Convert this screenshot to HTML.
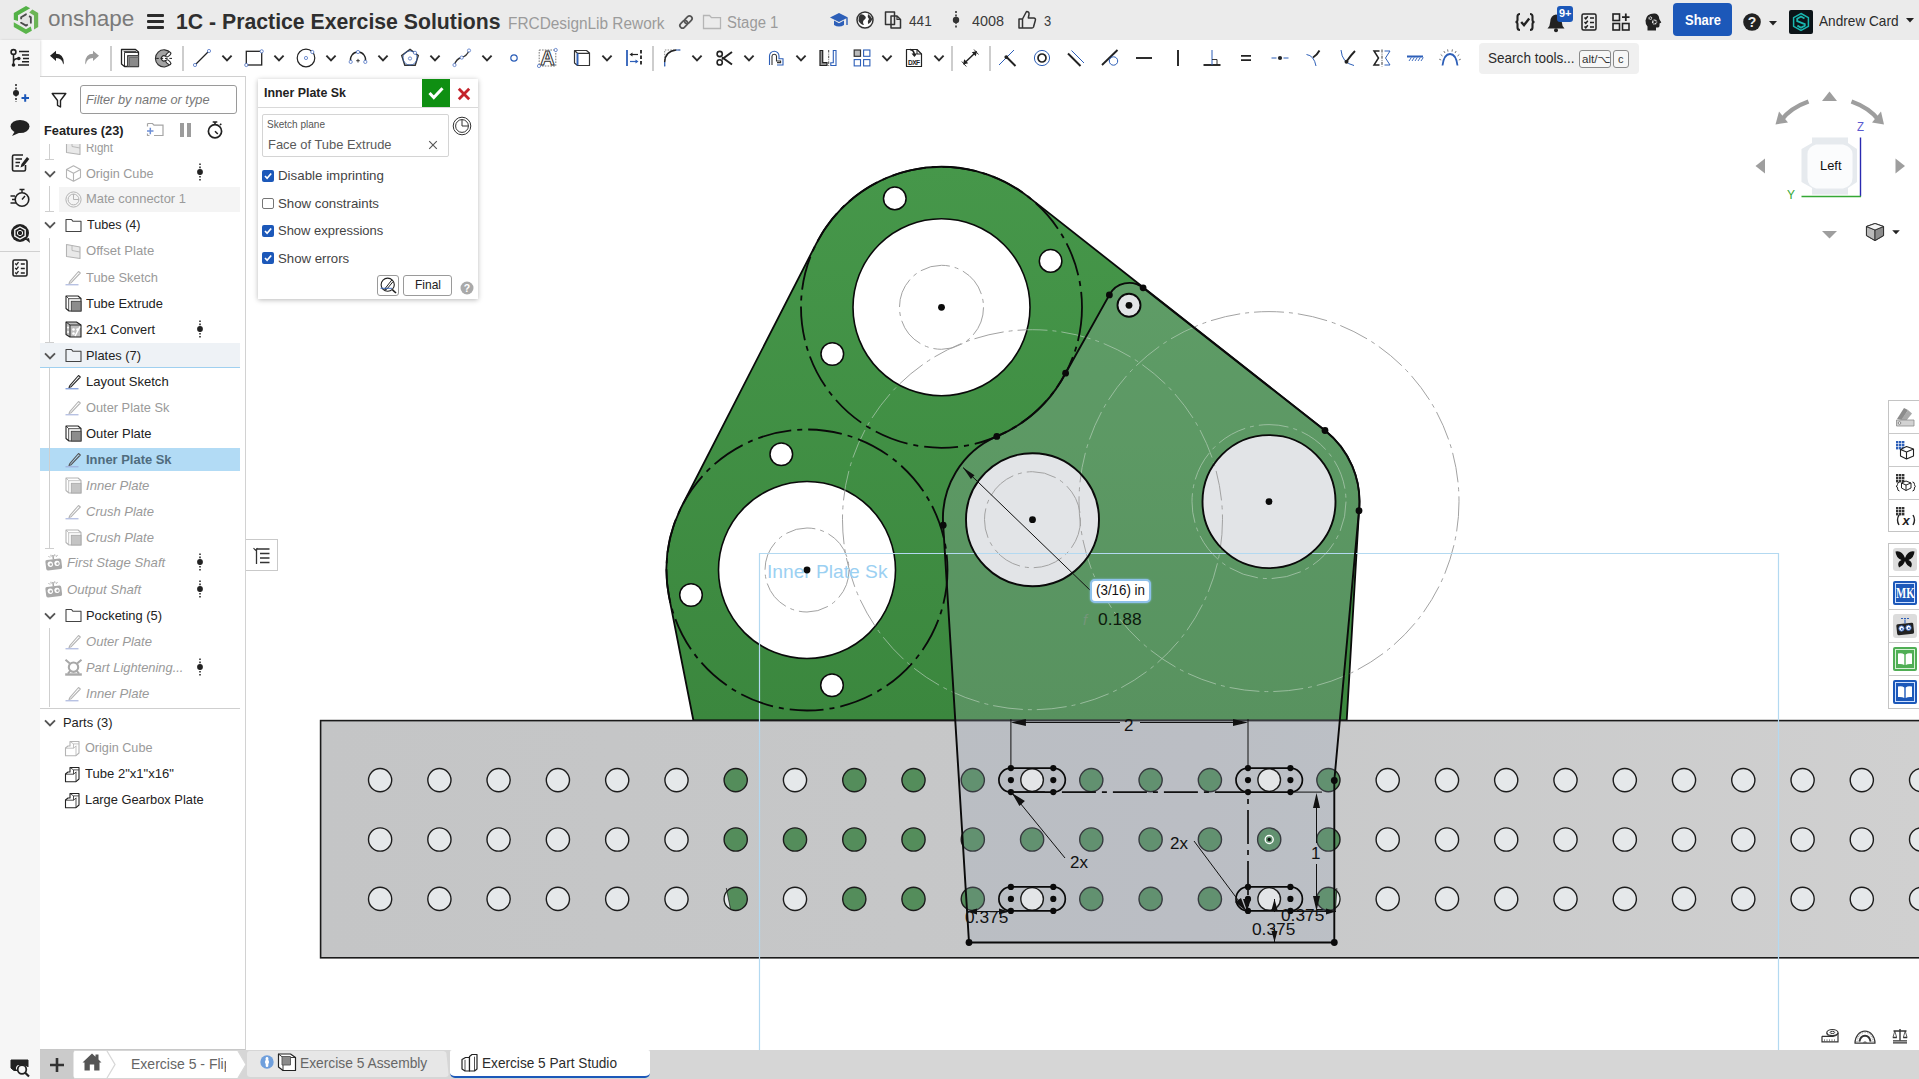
<!DOCTYPE html>
<html><head><meta charset="utf-8"><title>Onshape</title>
<style>
html,body{margin:0;padding:0;}
body{width:1919px;height:1079px;overflow:hidden;position:relative;background:#fff;font-family:"Liberation Sans","DejaVu Sans",sans-serif;}
.t{position:absolute;white-space:nowrap;transform-origin:0 50%;display:block;}
.a{position:absolute;}
svg{position:absolute;overflow:visible;}
svg text{font-family:"Liberation Sans",sans-serif;}
</style></head><body>
<svg width="1919" height="1079" viewBox="0 0 1919 1079" style="left:0;top:0">
<defs>
<linearGradient id="gd" x1="0" y1="166" x2="0" y2="720" gradientUnits="userSpaceOnUse"><stop offset="0" stop-color="#46974a"/><stop offset="1" stop-color="#3b873e"/></linearGradient>
<linearGradient id="gt" x1="320" y1="0" x2="1919" y2="0" gradientUnits="userSpaceOnUse"><stop offset="0" stop-color="#c4c5c6"/><stop offset="0.55" stop-color="#c7c8c9"/><stop offset="1" stop-color="#d0d0d0"/></linearGradient>
<clipPath id="ctube"><rect x="320" y="720.5" width="1600" height="237.5"/></clipPath><clipPath id="cabove"><rect x="320" y="0" width="1600" height="720.5"/></clipPath>
</defs>
<path d="M693.4,720.5 L669.1,597.1 A140.5,140.5 0 0 1 681.9,506.0 L816.4,243.3 A140.5,140.5 0 0 1 1028.4,196.9 L1325.0,430.5 A90.5,90.5 0 0 1 1359.0,510.7 L1346.7,720.5 Z" fill="url(#gd)" stroke="#0a0a0a" stroke-width="1.8" stroke-linejoin="round"/>
<circle cx="941.5" cy="307.3" r="88.5" fill="#fff" stroke="#0a0a0a" stroke-width="1.6"/>
<circle cx="807.0" cy="570.0" r="88.5" fill="#fff" stroke="#0a0a0a" stroke-width="1.6"/>
<circle cx="894.8" cy="198.4" r="11.3" fill="#fff" stroke="#0a0a0a" stroke-width="1.5"/>
<circle cx="1050.6" cy="260.9" r="11.3" fill="#fff" stroke="#0a0a0a" stroke-width="1.5"/>
<circle cx="832.3" cy="354.0" r="11.3" fill="#fff" stroke="#0a0a0a" stroke-width="1.5"/>
<circle cx="781.3" cy="454.2" r="11.3" fill="#fff" stroke="#0a0a0a" stroke-width="1.5"/>
<circle cx="691.0" cy="595.0" r="11.3" fill="#fff" stroke="#0a0a0a" stroke-width="1.5"/>
<circle cx="832.0" cy="685.3" r="11.3" fill="#fff" stroke="#0a0a0a" stroke-width="1.5"/>
<rect x="320.6" y="720.6" width="1610" height="237.2" fill="url(#gt)" stroke="#1a1a1a" stroke-width="1.6"/>
<circle cx="380.1" cy="780.1" r="11.6" fill="#e5e8ea" stroke="#1c1c1c" stroke-width="1.4"/>
<circle cx="439.4" cy="780.1" r="11.6" fill="#e5e8ea" stroke="#1c1c1c" stroke-width="1.4"/>
<circle cx="498.6" cy="780.1" r="11.6" fill="#e5e8ea" stroke="#1c1c1c" stroke-width="1.4"/>
<circle cx="557.9" cy="780.1" r="11.6" fill="#e5e8ea" stroke="#1c1c1c" stroke-width="1.4"/>
<circle cx="617.2" cy="780.1" r="11.6" fill="#e5e8ea" stroke="#1c1c1c" stroke-width="1.4"/>
<circle cx="676.5" cy="780.1" r="11.6" fill="#e5e8ea" stroke="#1c1c1c" stroke-width="1.4"/>
<circle cx="735.7" cy="780.1" r="11.6" fill="#548d5b" stroke="#1c1c1c" stroke-width="1.4"/>
<circle cx="795.0" cy="780.1" r="11.6" fill="#e5e8ea" stroke="#1c1c1c" stroke-width="1.4"/>
<circle cx="854.3" cy="780.1" r="11.6" fill="#548d5b" stroke="#1c1c1c" stroke-width="1.4"/>
<circle cx="913.5" cy="780.1" r="11.6" fill="#548d5b" stroke="#1c1c1c" stroke-width="1.4"/>
<circle cx="972.8" cy="780.1" r="11.6" fill="#548d5b" stroke="#1c1c1c" stroke-width="1.4"/>
<circle cx="1091.3" cy="780.1" r="11.6" fill="#548d5b" stroke="#1c1c1c" stroke-width="1.4"/>
<circle cx="1150.6" cy="780.1" r="11.6" fill="#548d5b" stroke="#1c1c1c" stroke-width="1.4"/>
<circle cx="1209.9" cy="780.1" r="11.6" fill="#548d5b" stroke="#1c1c1c" stroke-width="1.4"/>
<circle cx="1328.4" cy="780.1" r="11.6" fill="#548d5b" stroke="#1c1c1c" stroke-width="1.4"/>
<circle cx="1387.7" cy="780.1" r="11.6" fill="#e5e8ea" stroke="#1c1c1c" stroke-width="1.4"/>
<circle cx="1447.0" cy="780.1" r="11.6" fill="#e5e8ea" stroke="#1c1c1c" stroke-width="1.4"/>
<circle cx="1506.2" cy="780.1" r="11.6" fill="#e5e8ea" stroke="#1c1c1c" stroke-width="1.4"/>
<circle cx="1565.5" cy="780.1" r="11.6" fill="#e5e8ea" stroke="#1c1c1c" stroke-width="1.4"/>
<circle cx="1624.8" cy="780.1" r="11.6" fill="#e5e8ea" stroke="#1c1c1c" stroke-width="1.4"/>
<circle cx="1684.0" cy="780.1" r="11.6" fill="#e5e8ea" stroke="#1c1c1c" stroke-width="1.4"/>
<circle cx="1743.3" cy="780.1" r="11.6" fill="#e5e8ea" stroke="#1c1c1c" stroke-width="1.4"/>
<circle cx="1802.6" cy="780.1" r="11.6" fill="#e5e8ea" stroke="#1c1c1c" stroke-width="1.4"/>
<circle cx="1861.8" cy="780.1" r="11.6" fill="#e5e8ea" stroke="#1c1c1c" stroke-width="1.4"/>
<circle cx="1921.1" cy="780.1" r="11.6" fill="#e5e8ea" stroke="#1c1c1c" stroke-width="1.4"/>
<circle cx="380.1" cy="839.5" r="11.6" fill="#e5e8ea" stroke="#1c1c1c" stroke-width="1.4"/>
<circle cx="439.4" cy="839.5" r="11.6" fill="#e5e8ea" stroke="#1c1c1c" stroke-width="1.4"/>
<circle cx="498.6" cy="839.5" r="11.6" fill="#e5e8ea" stroke="#1c1c1c" stroke-width="1.4"/>
<circle cx="557.9" cy="839.5" r="11.6" fill="#e5e8ea" stroke="#1c1c1c" stroke-width="1.4"/>
<circle cx="617.2" cy="839.5" r="11.6" fill="#e5e8ea" stroke="#1c1c1c" stroke-width="1.4"/>
<circle cx="676.5" cy="839.5" r="11.6" fill="#e5e8ea" stroke="#1c1c1c" stroke-width="1.4"/>
<circle cx="735.7" cy="839.5" r="11.6" fill="#548d5b" stroke="#1c1c1c" stroke-width="1.4"/>
<circle cx="795.0" cy="839.5" r="11.6" fill="#548d5b" stroke="#1c1c1c" stroke-width="1.4"/>
<circle cx="854.3" cy="839.5" r="11.6" fill="#548d5b" stroke="#1c1c1c" stroke-width="1.4"/>
<circle cx="913.5" cy="839.5" r="11.6" fill="#548d5b" stroke="#1c1c1c" stroke-width="1.4"/>
<circle cx="972.8" cy="839.5" r="11.6" fill="#548d5b" stroke="#1c1c1c" stroke-width="1.4"/>
<circle cx="1032.1" cy="839.5" r="11.6" fill="#548d5b" stroke="#1c1c1c" stroke-width="1.4"/>
<circle cx="1091.3" cy="839.5" r="11.6" fill="#548d5b" stroke="#1c1c1c" stroke-width="1.4"/>
<circle cx="1150.6" cy="839.5" r="11.6" fill="#548d5b" stroke="#1c1c1c" stroke-width="1.4"/>
<circle cx="1209.9" cy="839.5" r="11.6" fill="#548d5b" stroke="#1c1c1c" stroke-width="1.4"/>
<circle cx="1269.2" cy="839.5" r="11.6" fill="#548d5b" stroke="#1c1c1c" stroke-width="1.4"/>
<circle cx="1328.4" cy="839.5" r="11.6" fill="#548d5b" stroke="#1c1c1c" stroke-width="1.4"/>
<circle cx="1387.7" cy="839.5" r="11.6" fill="#e5e8ea" stroke="#1c1c1c" stroke-width="1.4"/>
<circle cx="1447.0" cy="839.5" r="11.6" fill="#e5e8ea" stroke="#1c1c1c" stroke-width="1.4"/>
<circle cx="1506.2" cy="839.5" r="11.6" fill="#e5e8ea" stroke="#1c1c1c" stroke-width="1.4"/>
<circle cx="1565.5" cy="839.5" r="11.6" fill="#e5e8ea" stroke="#1c1c1c" stroke-width="1.4"/>
<circle cx="1624.8" cy="839.5" r="11.6" fill="#e5e8ea" stroke="#1c1c1c" stroke-width="1.4"/>
<circle cx="1684.0" cy="839.5" r="11.6" fill="#e5e8ea" stroke="#1c1c1c" stroke-width="1.4"/>
<circle cx="1743.3" cy="839.5" r="11.6" fill="#e5e8ea" stroke="#1c1c1c" stroke-width="1.4"/>
<circle cx="1802.6" cy="839.5" r="11.6" fill="#e5e8ea" stroke="#1c1c1c" stroke-width="1.4"/>
<circle cx="1861.8" cy="839.5" r="11.6" fill="#e5e8ea" stroke="#1c1c1c" stroke-width="1.4"/>
<circle cx="1921.1" cy="839.5" r="11.6" fill="#e5e8ea" stroke="#1c1c1c" stroke-width="1.4"/>
<circle cx="380.1" cy="898.9" r="11.6" fill="#e5e8ea" stroke="#1c1c1c" stroke-width="1.4"/>
<circle cx="439.4" cy="898.9" r="11.6" fill="#e5e8ea" stroke="#1c1c1c" stroke-width="1.4"/>
<circle cx="498.6" cy="898.9" r="11.6" fill="#e5e8ea" stroke="#1c1c1c" stroke-width="1.4"/>
<circle cx="557.9" cy="898.9" r="11.6" fill="#e5e8ea" stroke="#1c1c1c" stroke-width="1.4"/>
<circle cx="617.2" cy="898.9" r="11.6" fill="#e5e8ea" stroke="#1c1c1c" stroke-width="1.4"/>
<circle cx="676.5" cy="898.9" r="11.6" fill="#e5e8ea" stroke="#1c1c1c" stroke-width="1.4"/>
<circle cx="735.7" cy="898.9" r="11.6" fill="#548d5b" stroke="#1c1c1c" stroke-width="1.4"/>
<circle cx="795.0" cy="898.9" r="11.6" fill="#e5e8ea" stroke="#1c1c1c" stroke-width="1.4"/>
<circle cx="854.3" cy="898.9" r="11.6" fill="#548d5b" stroke="#1c1c1c" stroke-width="1.4"/>
<circle cx="913.5" cy="898.9" r="11.6" fill="#548d5b" stroke="#1c1c1c" stroke-width="1.4"/>
<circle cx="972.8" cy="898.9" r="11.6" fill="#548d5b" stroke="#1c1c1c" stroke-width="1.4"/>
<circle cx="1091.3" cy="898.9" r="11.6" fill="#548d5b" stroke="#1c1c1c" stroke-width="1.4"/>
<circle cx="1150.6" cy="898.9" r="11.6" fill="#548d5b" stroke="#1c1c1c" stroke-width="1.4"/>
<circle cx="1209.9" cy="898.9" r="11.6" fill="#548d5b" stroke="#1c1c1c" stroke-width="1.4"/>
<circle cx="1328.4" cy="898.9" r="11.6" fill="#548d5b" stroke="#1c1c1c" stroke-width="1.4"/>
<circle cx="1387.7" cy="898.9" r="11.6" fill="#e5e8ea" stroke="#1c1c1c" stroke-width="1.4"/>
<circle cx="1447.0" cy="898.9" r="11.6" fill="#e5e8ea" stroke="#1c1c1c" stroke-width="1.4"/>
<circle cx="1506.2" cy="898.9" r="11.6" fill="#e5e8ea" stroke="#1c1c1c" stroke-width="1.4"/>
<circle cx="1565.5" cy="898.9" r="11.6" fill="#e5e8ea" stroke="#1c1c1c" stroke-width="1.4"/>
<circle cx="1624.8" cy="898.9" r="11.6" fill="#e5e8ea" stroke="#1c1c1c" stroke-width="1.4"/>
<circle cx="1684.0" cy="898.9" r="11.6" fill="#e5e8ea" stroke="#1c1c1c" stroke-width="1.4"/>
<circle cx="1743.3" cy="898.9" r="11.6" fill="#e5e8ea" stroke="#1c1c1c" stroke-width="1.4"/>
<circle cx="1802.6" cy="898.9" r="11.6" fill="#e5e8ea" stroke="#1c1c1c" stroke-width="1.4"/>
<circle cx="1861.8" cy="898.9" r="11.6" fill="#e5e8ea" stroke="#1c1c1c" stroke-width="1.4"/>
<circle cx="1921.1" cy="898.9" r="11.6" fill="#e5e8ea" stroke="#1c1c1c" stroke-width="1.4"/>
<clipPath id="cl1"><path d="M700,880 L724.8,880 L732.6,920 L700,920 Z"/></clipPath>
<clipPath id="cl2"><path d="M1337.3,880 L1360,880 L1360,920 L1335.0,920 Z"/></clipPath>
<circle cx="735.7" cy="898.9" r="10.9" fill="#e5e8ea" clip-path="url(#cl1)"/>
<circle cx="1328.4" cy="898.9" r="10.9" fill="#e5e8ea" clip-path="url(#cl2)"/>
<path d="M726.3,888 L730.7,910 M1336.8,888 L1335.5,910" stroke="#222" stroke-width="0.8" clip-path="url(#ctube)"/>
<path d="M1109.4,294.9 A22.3,22.3 0 0 1 1143.1,287.8 L1325.0,430.5 A90.5,90.5 0 0 1 1359.0,510.7 L1334.3,780.5 L1334.3,942.5 L969.0,942.5 L943.2,525.2 A89.5,89.5 0 0 1 996.8,436.4 A140.5,140.5 0 0 0 1065.6,373.2 Z M1202.5,501.6 a66.5,66.5 0 1 0 133.0,0 a66.5,66.5 0 1 0 -133.0,0 Z M966.0,519.7 a66.5,66.5 0 1 0 133.0,0 a66.5,66.5 0 1 0 -133.0,0 Z M1117.5,305.3 a11.5,11.5 0 1 0 23,0 a11.5,11.5 0 1 0 -23,0 Z " fill="rgba(186,184,206,0.23)" fill-rule="evenodd" stroke="none" clip-path="url(#cabove)"/>
<path d="M1109.4,294.9 A22.3,22.3 0 0 1 1143.1,287.8 L1325.0,430.5 A90.5,90.5 0 0 1 1359.0,510.7 L1334.3,780.5 L1334.3,942.5 L969.0,942.5 L943.2,525.2 A89.5,89.5 0 0 1 996.8,436.4 A140.5,140.5 0 0 0 1065.6,373.2 Z M1202.5,501.6 a66.5,66.5 0 1 0 133.0,0 a66.5,66.5 0 1 0 -133.0,0 Z M966.0,519.7 a66.5,66.5 0 1 0 133.0,0 a66.5,66.5 0 1 0 -133.0,0 Z M1117.5,305.3 a11.5,11.5 0 1 0 23,0 a11.5,11.5 0 1 0 -23,0 Z " fill="rgba(146,162,180,0.23)" fill-rule="evenodd" stroke="none" clip-path="url(#ctube)"/>
<circle cx="1269.0" cy="501.6" r="66.5" fill="#e2e4e7"/>
<circle cx="1032.5" cy="519.7" r="66.5" fill="#e2e4e7"/>
<circle cx="1129.0" cy="305.3" r="11.5" fill="#e2e4e7"/>
<circle cx="1032.1" cy="780.1" r="11.3" fill="#e3e5e7" stroke="#1c1c1c" stroke-width="1.4"/>
<circle cx="1032.1" cy="898.9" r="11.3" fill="#e3e5e7" stroke="#1c1c1c" stroke-width="1.4"/>
<circle cx="1269.2" cy="780.1" r="11.3" fill="#e3e5e7" stroke="#1c1c1c" stroke-width="1.4"/>
<circle cx="1269.2" cy="898.9" r="11.3" fill="#e3e5e7" stroke="#1c1c1c" stroke-width="1.4"/>
<clipPath id="cin"><path clip-rule="evenodd" d="M693.4,720.5 L669.1,597.1 A140.5,140.5 0 0 1 681.9,506.0 L816.4,243.3 A140.5,140.5 0 0 1 1028.4,196.9 L1325.0,430.5 A90.5,90.5 0 0 1 1359.0,510.7 L1346.7,720.5 Z M853.0,307.3 a88.5,88.5 0 1 0 177.0,0 a88.5,88.5 0 1 0 -177.0,0 Z M718.5,570.0 a88.5,88.5 0 1 0 177.0,0 a88.5,88.5 0 1 0 -177.0,0 Z M1202.5,501.6 a66.5,66.5 0 1 0 133.0,0 a66.5,66.5 0 1 0 -133.0,0 Z M966.0,519.7 a66.5,66.5 0 1 0 133.0,0 a66.5,66.5 0 1 0 -133.0,0 Z "/></clipPath>
<clipPath id="cout"><path clip-rule="evenodd" d="M0,0 H1919 V1079 H0 Z M693.4,720.5 L669.1,597.1 A140.5,140.5 0 0 1 681.9,506.0 L816.4,243.3 A140.5,140.5 0 0 1 1028.4,196.9 L1325.0,430.5 A90.5,90.5 0 0 1 1359.0,510.7 L1346.7,720.5 Z M853.0,307.3 a88.5,88.5 0 1 0 177.0,0 a88.5,88.5 0 1 0 -177.0,0 Z M718.5,570.0 a88.5,88.5 0 1 0 177.0,0 a88.5,88.5 0 1 0 -177.0,0 Z M1202.5,501.6 a66.5,66.5 0 1 0 133.0,0 a66.5,66.5 0 1 0 -133.0,0 Z M966.0,519.7 a66.5,66.5 0 1 0 133.0,0 a66.5,66.5 0 1 0 -133.0,0 Z "/></clipPath>
<g clip-path="url(#cout)" fill="none" stroke="#a2a2a2" stroke-width="1" stroke-dasharray="30 5 4 5"><circle cx="1269.0" cy="501.6" r="190" /><circle cx="1032.5" cy="519.7" r="190" /><circle cx="1269.0" cy="501.6" r="77" /><circle cx="1032.5" cy="519.7" r="48" /><circle cx="941.5" cy="307.3" r="42" /><circle cx="807.0" cy="570.0" r="42" /></g>
<g clip-path="url(#cin)" fill="none" stroke="#b4cdb6" stroke-opacity="0.7" stroke-width="1" stroke-dasharray="30 5 4 5"><circle cx="1269.0" cy="501.6" r="190" /><circle cx="1032.5" cy="519.7" r="190" /><circle cx="1269.0" cy="501.6" r="77" /><circle cx="1032.5" cy="519.7" r="48" /><circle cx="941.5" cy="307.3" r="42" /><circle cx="807.0" cy="570.0" r="42" /></g>
<path d="M759.5,1052 V553.5 H1778.5 V1052" fill="none" stroke="#b3d9f1" stroke-width="1.2"/>
<text x="767" y="577.5" font-size="18.6" fill="#9bd0f2" textLength="120.5" lengthAdjust="spacingAndGlyphs">Inner Plate Sk</text>
<circle cx="941.5" cy="307.3" r="140.5" fill="none" stroke="#0a0a0a" stroke-width="1.8" stroke-dasharray="34 6 5 6"/>
<circle cx="807.0" cy="570.0" r="140.5" fill="none" stroke="#0a0a0a" stroke-width="1.8" stroke-dasharray="34 6 5 6"/>
<path d="M1065.6,373.2 L1109.4,294.9 A22.3,22.3 0 0 1 1143.1,287.8 L1325.0,430.5 A90.5,90.5 0 0 1 1359.0,510.7 L1334.3,780.5 L1334.3,942.5 L969.0,942.5 L943.2,525.2 A89.5,89.5 0 0 1 996.8,436.4 A140.5,140.5 0 0 0 1065.6,373.2" fill="none" stroke="#0a0a0a" stroke-width="1.9" stroke-linejoin="round"/>
<circle cx="1269.0" cy="501.6" r="66.5" fill="none" stroke="#0a0a0a" stroke-width="1.9"/>
<circle cx="1032.5" cy="519.7" r="66.5" fill="none" stroke="#0a0a0a" stroke-width="1.9"/>
<circle cx="1129.0" cy="305.3" r="11.5" fill="none" stroke="#0a0a0a" stroke-width="1.9"/>
<circle cx="941.5" cy="307.3" r="3.4" fill="#0a0a0a"/>
<circle cx="807.0" cy="570.0" r="3.4" fill="#0a0a0a"/>
<circle cx="1269.0" cy="501.6" r="3.4" fill="#0a0a0a"/>
<circle cx="1032.5" cy="519.7" r="3.4" fill="#0a0a0a"/>
<circle cx="1129.0" cy="305.3" r="3.4" fill="#0a0a0a"/>
<circle cx="1065.6" cy="373.2" r="3.4" fill="#0a0a0a"/>
<circle cx="1109.4" cy="294.9" r="3.4" fill="#0a0a0a"/>
<circle cx="1143.1" cy="287.8" r="3.4" fill="#0a0a0a"/>
<circle cx="1325.0" cy="430.5" r="3.4" fill="#0a0a0a"/>
<circle cx="1359.0" cy="510.7" r="3.4" fill="#0a0a0a"/>
<circle cx="969.0" cy="942.5" r="3.4" fill="#0a0a0a"/>
<circle cx="1334.3" cy="942.5" r="3.4" fill="#0a0a0a"/>
<circle cx="996.8" cy="436.4" r="3.4" fill="#0a0a0a"/>
<circle cx="943.2" cy="525.2" r="3.4" fill="#0a0a0a"/>
<circle cx="1334.3" cy="780.5" r="3.4" fill="#0a0a0a"/>
<path d="M1010.9,768.1 H1053.3 A12,12 0 0 1 1053.3,792.1 H1010.9 A12,12 0 0 1 1010.9,768.1 Z" fill="none" stroke="#0a0a0a" stroke-width="1.7"/>
<circle cx="1010.9" cy="768.1" r="3.1" fill="#0a0a0a"/>
<circle cx="1010.9" cy="780.1" r="3.1" fill="#0a0a0a"/>
<circle cx="1010.9" cy="792.1" r="3.1" fill="#0a0a0a"/>
<circle cx="1053.3" cy="768.1" r="3.1" fill="#0a0a0a"/>
<circle cx="1053.3" cy="780.1" r="3.1" fill="#0a0a0a"/>
<circle cx="1053.3" cy="792.1" r="3.1" fill="#0a0a0a"/>
<path d="M1010.9,886.9 H1053.3 A12,12 0 0 1 1053.3,910.9 H1010.9 A12,12 0 0 1 1010.9,886.9 Z" fill="none" stroke="#0a0a0a" stroke-width="1.7"/>
<circle cx="1010.9" cy="886.9" r="3.1" fill="#0a0a0a"/>
<circle cx="1010.9" cy="898.9" r="3.1" fill="#0a0a0a"/>
<circle cx="1010.9" cy="910.9" r="3.1" fill="#0a0a0a"/>
<circle cx="1053.3" cy="886.9" r="3.1" fill="#0a0a0a"/>
<circle cx="1053.3" cy="898.9" r="3.1" fill="#0a0a0a"/>
<circle cx="1053.3" cy="910.9" r="3.1" fill="#0a0a0a"/>
<path d="M1248.0,768.1 H1290.4 A12,12 0 0 1 1290.4,792.1 H1248.0 A12,12 0 0 1 1248.0,768.1 Z" fill="none" stroke="#0a0a0a" stroke-width="1.7"/>
<circle cx="1248.0" cy="768.1" r="3.1" fill="#0a0a0a"/>
<circle cx="1248.0" cy="780.1" r="3.1" fill="#0a0a0a"/>
<circle cx="1248.0" cy="792.1" r="3.1" fill="#0a0a0a"/>
<circle cx="1290.4" cy="768.1" r="3.1" fill="#0a0a0a"/>
<circle cx="1290.4" cy="780.1" r="3.1" fill="#0a0a0a"/>
<circle cx="1290.4" cy="792.1" r="3.1" fill="#0a0a0a"/>
<path d="M1248.0,886.9 H1290.4 A12,12 0 0 1 1290.4,910.9 H1248.0 A12,12 0 0 1 1248.0,886.9 Z" fill="none" stroke="#0a0a0a" stroke-width="1.7"/>
<circle cx="1248.0" cy="886.9" r="3.1" fill="#0a0a0a"/>
<circle cx="1248.0" cy="898.9" r="3.1" fill="#0a0a0a"/>
<circle cx="1248.0" cy="910.9" r="3.1" fill="#0a0a0a"/>
<circle cx="1290.4" cy="886.9" r="3.1" fill="#0a0a0a"/>
<circle cx="1290.4" cy="898.9" r="3.1" fill="#0a0a0a"/>
<circle cx="1290.4" cy="910.9" r="3.1" fill="#0a0a0a"/>
<path d="M1010.9,792.1 H1248.0 V911" fill="none" stroke="#111" stroke-width="1.7" stroke-dasharray="34 6 5 6"/>
<path d="M1010.9,768 V719 M1248.0,768 V719 M1014.9,722.5 H1120 M1140,722.5 H1244.0" stroke="#111" stroke-width="1" fill="none"/>
<path d="M1010.9,722.5 l15,-3.5 v7 Z M1248.0,722.5 l-15,-3.5 v7 Z" fill="#111"/>
<text x="1124" y="731" font-size="17" fill="#111">2</text>
<path d="M1290.0,792.1 H1322 M1316.5,797 V843 M1316.5,864 V905 M1290,910.9 h46" stroke="#111" stroke-width="1" fill="none"/>
<path d="M1316.5,793 l-3.5,15 h7 Z M1316.5,911 l-3.5,-15 h7 Z" fill="#111"/>
<text x="1311" y="859" font-size="17" fill="#111">1</text>
<path d="M1011.9,793 L1065,858 M1194,841 L1244,908" stroke="#111" stroke-width="1" fill="none"/>
<path d="M1011.9,793 l13,8 l-5.5,5 Z M1246,911 l-11,-9 l6,-4 Z" fill="#111"/>
<text x="1070" y="868" font-size="17" fill="#111">2x</text><text x="1170" y="849" font-size="17" fill="#111">2x</text>
<text x="965" y="923" font-size="16.4" fill="#111" textLength="43.3" lengthAdjust="spacingAndGlyphs">0.375</text>
<text x="1281" y="921" font-size="16.4" fill="#111" textLength="43.3" lengthAdjust="spacingAndGlyphs">0.375</text>
<text x="1252" y="935" font-size="16.4" fill="#111" textLength="43.3" lengthAdjust="spacingAndGlyphs">0.375</text>
<path d="M967,911.5 H1009 M1292,911.5 H1336 M1274.5,899 V912 M1274.5,928 V942" stroke="#111" stroke-width="1" fill="none"/>
<path d="M967,911.5 l10,-3 v6 Z M1009,911.5 l-10,-3 v6 Z M1336,911.5 l-10,-3 v6 Z M1274.5,899 l-3,11 h6 Z M1274.5,942 l-3,-11 h6 Z M1247,911 l-4,-12 h8 Z" fill="#111"/>
<circle cx="1269.2" cy="839.5" r="4" fill="none" stroke="#fff" stroke-width="1.4"/><circle cx="1269.2" cy="839.5" r="1.7" fill="#111"/>
<path d="M963,467.5 L1092,592" stroke="#111" stroke-width="1" fill="none"/>
<path d="M963,467.5 l11.5,7.8 l-3.6,3.6 Z" fill="#111"/>
<text x="1083" y="625" font-size="15" fill="#74967a" font-style="italic">f</text>
<text x="1098" y="625" font-size="16.5" fill="#0c1a0c" textLength="43.6" lengthAdjust="spacingAndGlyphs">0.188</text>
</svg>
<div class="a" style="left:1090px;top:579px;width:57px;height:20px;border:2px solid #8fc1ea;border-radius:5px;background:#fff;box-shadow:0 0 2px #8fc1ea;"></div>
<span class="t" style="left:1095.8px;top:582.3px;font-size:14.5px;line-height:17px;color:#111;transform:scaleX(0.9213);">(3/16) in</span>
<div class="a" style="left:0px;top:0px;width:1919px;height:40px;background:#ebebeb;"></div>
<div class="a" style="left:40px;top:40px;width:1879px;height:36px;background:#fff;"></div>
<div class="a" style="left:0px;top:40px;width:40px;height:1039px;background:#f6f6f6;box-shadow:1px 0 2px rgba(0,0,0,0.12);"></div>
<div class="a" style="left:40px;top:76px;width:206px;height:974px;background:#fff;border-right:1px solid #d2d2d2;border-top:1px solid #d0d0d0;border-bottom:1px solid #c8c8c8;box-sizing:border-box;"></div>
<div class="a" style="left:40px;top:1050px;width:1879px;height:29px;background:#d6d6d6;"></div>
<svg width="30" height="30" viewBox="-15 -15 30 30" style="left:10.9px;top:4.8px;"><path d="M-12.2,-0.3 V-7.05 L0,-14.1 L4.2,-11.7 L-8,-4.65 V0.9 Z" fill="#53b146" transform="rotate(0)"/><path d="M-12.2,-0.3 V-7.05 L0,-14.1 L4.2,-11.7 L-8,-4.65 V0.9 Z" fill="#6cb455" transform="rotate(120)"/><path d="M-12.2,-0.3 V-7.05 L0,-14.1 L4.2,-11.7 L-8,-4.65 V0.9 Z" fill="#5bb54b" transform="rotate(240)"/><path d="M0,-5.6 L4.85,-2.8 V2.8 L0,5.6 L-4.85,2.8 V-2.8 Z" fill="#e3e3e3" stroke="#4b4b4b" stroke-width="1.8" stroke-dasharray="8.4 2.8" stroke-dashoffset="-3.5"/></svg>
<span class="t" style="left:47.7px;top:5.6px;font-size:22px;line-height:26px;color:#7a7a7a;transform:scaleX(1.0224);">onshape</span>
<div class="a" style="left:147px;top:13.5px;width:17px;height:3px;background:#2b2b2b;border-radius:1px;"></div>
<div class="a" style="left:147px;top:19.5px;width:17px;height:3px;background:#2b2b2b;border-radius:1px;"></div>
<div class="a" style="left:147px;top:25.5px;width:17px;height:3px;background:#2b2b2b;border-radius:1px;"></div>
<span class="t" style="left:175.5px;top:7.7px;font-size:22.5px;line-height:27px;color:#2f2f2f;transform:scaleX(0.9437);font-weight:bold;">1C - Practice Exercise Solutions</span>
<span class="t" style="left:508.0px;top:13.5px;font-size:16px;line-height:19px;color:#9b9b9b;transform:scaleX(0.9618);">FRCDesignLib Rework</span>
<svg width="18" height="18" viewBox="-9 -9 18 18" style="left:677.0px;top:12.5px;"><g transform="rotate(-45)" fill="none" stroke="#555" stroke-width="1.7"><rect x="-7.5" y="-2.6" width="8.6" height="5.2" rx="2.6"/><rect x="-1.1" y="-2.6" width="8.6" height="5.2" rx="2.6"/></g></svg>
<svg width="20" height="20" viewBox="-10 -10 20 20" style="left:702.0px;top:11.5px;"><path d="M-8.5,-6.5 H-2.5 L-0.5,-4.3 H8.5 V6.5 H-8.5 Z" fill="none" stroke="#b5b5b5" stroke-width="1.3"/></svg>
<span class="t" style="left:726.5px;top:12.5px;font-size:16px;line-height:19px;color:#9b9b9b;transform:scaleX(0.9319);">Stage 1</span>
<svg width="20" height="20" viewBox="-10 -10 20 20" style="left:829.0px;top:10.0px;"><path d="M-9,-2.5 L0,-7 L9,-2.5 L0,2 Z" fill="#2d5fb8"/><path d="M-5,0.5 V5 Q0,8 5,5 V0.5 L0,3.3 Z" fill="#2d5fb8"/><path d="M8,-2 V5" stroke="#2d5fb8" stroke-width="1.4"/></svg>
<svg width="20" height="20" viewBox="-10 -10 20 20" style="left:855.0px;top:10.0px;"><circle r="8" fill="#fff" stroke="#333" stroke-width="1.5"/><path d="M-5,-5.5 Q-2,-6.5 0,-4 Q2,-2 -1,0 Q-3,2 -1,5 Q-4,5 -6.5,1 Q-7,-3 -5,-5.5 Z M3,-6 Q6,-4 7.3,-1 Q6,3 3,4 Q2,1 4,-1 Q2,-3 3,-6 Z" fill="#333"/></svg>
<svg width="20" height="20" viewBox="-10 -10 20 20" style="left:883.0px;top:10.0px;"><path d="M-7.5,-8 H1.5 V4.5 H-7.5 Z M-2,-4 H4 L7.5,-0.5 V8 H-2 Z" fill="#ebebeb" stroke="#333" stroke-width="1.5" stroke-linejoin="round"/><path d="M4,-4 V-0.5 H7.5" fill="none" stroke="#333" stroke-width="1.2"/></svg>
<span class="t" style="left:909.2px;top:11.5px;font-size:14.8px;line-height:18px;color:#3a3a3a;transform:scaleX(0.9193);">441</span>
<svg width="20" height="20" viewBox="-10 -10 20 20" style="left:946.0px;top:10.0px;"><circle r="3.2" fill="#333"/><path d="M0,-9 V9" stroke="#333" stroke-width="1.6" stroke-dasharray="2 1.6"/></svg>
<span class="t" style="left:971.6px;top:11.5px;font-size:14.8px;line-height:18px;color:#3a3a3a;transform:scaleX(0.9719);">4008</span>
<svg width="20" height="20" viewBox="-10 -10 20 20" style="left:1017.0px;top:10.0px;"><path d="M-8,-1 H-4.5 V8 H-8 Z M-4.5,-1 L-0.5,-8.5 Q2.5,-8.5 2,-5.5 L1.3,-2 H7 Q9,-1.5 8.3,0.5 L6.5,7 Q6,8 5,8 H-4.5" fill="none" stroke="#333" stroke-width="1.5" stroke-linejoin="round"/></svg>
<span class="t" style="left:1043.9px;top:11.5px;font-size:14.8px;line-height:18px;color:#3a3a3a;transform:scaleX(0.8747);">3</span>
<svg width="20" height="20" viewBox="-10 -10 20 20" style="left:1515.0px;top:11.5px;"><path d="M-5,-8 Q-7.5,-8 -7.5,-5.5 V-2 Q-7.5,0 -9.5,0 Q-7.5,0 -7.5,2 V5.5 Q-7.5,8 -5,8 M5,-8 Q7.5,-8 7.5,-5.5 V-2 Q7.5,0 9.5,0 Q7.5,0 7.5,2 V5.5 Q7.5,8 5,8" fill="none" stroke="#222" stroke-width="2.1"/><path d="M-3.8,0 L-1,3.2 L4.2,-3.6" fill="none" stroke="#222" stroke-width="2.4"/></svg>
<svg width="20" height="20" viewBox="-10 -10 20 20" style="left:1546.0px;top:13.0px;"><path d="M0,-8.5 Q5.5,-8 5.8,-1 Q6,3.5 8.5,5.5 H-8.5 Q-6,3.5 -5.8,-1 Q-5.5,-8 0,-8.5 Z" fill="#222"/><circle cy="7.3" r="2" fill="#222"/></svg>
<div class="a" style="left:1557px;top:5.8px;width:16px;height:16.2px;background:#1c58b9;border-radius:3px;"></div>
<span class="t" style="left:1559.0px;top:7.0px;font-size:10.5px;line-height:13px;color:#fff;transform:scaleX(1.0440);font-weight:bold;">9+</span>
<svg width="20" height="20" viewBox="-10 -10 20 20" style="left:1579.0px;top:11.5px;"><rect x="-7" y="-8" width="14" height="16" rx="1.5" fill="#ebebeb" stroke="#222" stroke-width="1.5"/><path d="M-4.5,-4.5 l1.3,1.3 l2,-2.6 M-4.5,0 l1.3,1.3 l2,-2.6 M-4.5,4.5 l1.3,1.3 l2,-2.6 M1,-4 H5 M1,0.5 H5 M1,5 H5" fill="none" stroke="#222" stroke-width="1.5"/></svg>
<svg width="20" height="20" viewBox="-10 -10 20 20" style="left:1611.0px;top:11.5px;"><rect x="-8" y="-8" width="6.5" height="6.5" fill="none" stroke="#222" stroke-width="1.6"/><rect x="-8" y="1.5" width="6.5" height="6.5" fill="none" stroke="#222" stroke-width="1.6"/><rect x="1.5" y="1.5" width="6.5" height="6.5" fill="none" stroke="#222" stroke-width="1.6"/><path d="M4.8,-8.5 V-1 M1,-4.8 H8.5" stroke="#222" stroke-width="1.8"/></svg>
<svg width="20" height="20" viewBox="-10 -10 20 20" style="left:1643.0px;top:11.5px;"><g transform="scale(-1,1)"><path d="M-2,-8.5 Q6.5,-9 7.5,-1.5 Q7.7,2 5.5,4.5 V8.5 H-3 V5.5 H-5 Q-6.5,5.5 -6.5,3.5 V1.5 L-8.3,0.5 L-6.3,-3 Q-6,-8 -2,-8.5 Z" fill="#222"/><circle cx="-1.6" cy="0" r="1.9" fill="none" stroke="#ebebeb" stroke-width="1.5" stroke-dasharray="1 0.6"/><circle cx="2.6" cy="-3.8" r="1.3" fill="none" stroke="#ebebeb" stroke-width="1.2" stroke-dasharray="0.8 0.5"/></g></svg>
<div class="a" style="left:1673px;top:3px;width:59px;height:32.8px;background:#1c58b9;border-radius:4px;"></div>
<span class="t" style="left:1684.6px;top:11.0px;font-size:14.8px;line-height:18px;color:#fff;transform:scaleX(0.8752);font-weight:bold;">Share</span>
<svg width="20" height="20" viewBox="-10 -10 20 20" style="left:1742.0px;top:12.0px;"><circle r="8.8" fill="#222"/><text x="0" y="5" font-size="14" font-weight="bold" fill="#ebebeb" text-anchor="middle">?</text></svg>
<svg width="12" height="12" viewBox="-6 -6 12 12" style="left:1767.0px;top:16.5px;"><path d="M-4,-2 H4 L0,2.5 Z" fill="#222"/></svg>
<div class="a" style="left:1789px;top:10px;width:24px;height:24px;background:#0c1418;border-radius:2px;"></div>
<svg width="20" height="20" viewBox="-10 -10 20 20" style="left:1791.0px;top:12.0px;"><path d="M0,-8.5 L7.4,-4.3 V4.3 L0,8.5 L-7.4,4.3 V-4.3 Z" fill="none" stroke="#19b7b0" stroke-width="1.5"/><path d="M3.5,-3.5 L0,-5.5 L-3.8,-3.3 V-0.8 L3.8,2.2 V3.6 L0,5.7 L-3.6,3.6" fill="none" stroke="#19b7b0" stroke-width="1.8"/></svg>
<span class="t" style="left:1818.8px;top:12.0px;font-size:14.8px;line-height:18px;color:#2b2b2b;transform:scaleX(0.9216);">Andrew Card</span>
<svg width="12" height="12" viewBox="-6 -6 12 12" style="left:1904.0px;top:14.0px;"><path d="M-4,-2 H4 L0,2.5 Z" fill="#222"/></svg>
<svg width="20" height="20" viewBox="-10 -10 20 20" style="left:47.0px;top:47.6px;"><path d="M-7,-2.2 L-1,-7.2 V-4.2 Q6.5,-4 6.8,4.5 Q6.8,5.5 6.2,6.4 Q5.5,0.3 -1,0 V3 Z" fill="#222"/></svg>
<svg width="20" height="20" viewBox="-10 -10 20 20" style="left:82.0px;top:47.6px;"><g transform="scale(-1,1)"><path d="M-7,-2.2 L-1,-7.2 V-4.2 Q6.5,-4 6.8,4.5 Q6.8,5.5 6.2,6.4 Q5.5,0.3 -1,0 V3 Z" fill="#9c9c9c"/></g></svg>
<div class="a" style="left:110.3px;top:45.5px;width:1.5px;height:25.5px;background:#cdcdcd;"></div>
<svg width="20" height="20" viewBox="-10 -10 20 20" style="left:120.0px;top:48.0px;"><path d="M-8.5,-8.5 H5.5 L8.5,-6 V8.5 H-5.5 L-8.5,6 Z" fill="#fff" stroke="#222" stroke-width="1.3" stroke-linejoin="round"/><path d="M-6.3,-6.5 H6.3" stroke="#222" stroke-width="0.8" fill="none"/><path d="M-5.5,8.5 V-5.5 H8" fill="none" stroke="#222" stroke-width="0.9"/><path d="M-2.5,-2.5 H8.5 V8.5 H-2.5 Z" fill="#8a8a8a" stroke="#444" stroke-width="1"/><path d="M-2.5,-2.5 L-0.5,-0.5 H8.5 M-0.5,-0.5 V8.5" stroke="#666" stroke-width="0.8" fill="none"/></svg>
<svg width="20" height="20" viewBox="-10 -10 20 20" style="left:154.5px;top:48.0px;"><g transform="translate(-1,0.4)"><path d="M6.8,-5.3 A8.6,8.6 0 1 0 6.8,5.3 L1.5,2.1 A2.6,2.6 0 1 1 1.5,-2.1 Z" fill="#a3a3a3" stroke="#2e2e2e" stroke-width="1.1" stroke-linejoin="round"/><ellipse cx="4.3" cy="-3.9" rx="3" ry="1.6" transform="rotate(-42 4.3 -3.9)" fill="#fff" stroke="#2e2e2e" stroke-width="1"/><ellipse cx="4.3" cy="3.9" rx="3" ry="1.6" transform="rotate(42 4.3 3.9)" fill="#fff" stroke="#2e2e2e" stroke-width="1"/><path d="M-7.8,0 H9.6" stroke="#222" stroke-width="1" stroke-dasharray="2.6 1.8"/></g></svg>
<div class="a" style="left:182.3px;top:45.5px;width:1.5px;height:25.5px;background:#cdcdcd;"></div>
<svg width="20" height="20" viewBox="-10 -10 20 20" style="left:191.7px;top:48.0px;"><path d="M-7,7 L7,-7" stroke="#222" stroke-width="1.3"/><circle cx="-7" cy="7" r="1.6" fill="#fff" stroke="#4f74c4" stroke-width="0.8"/><circle cx="7" cy="-7" r="1.6" fill="#fff" stroke="#4f74c4" stroke-width="0.8"/></svg>
<svg width="14" height="14" viewBox="-7 -7 14 14" style="left:219.7px;top:50.8px;"><path d="M-4.6,-2.3 L0,2.3 L4.6,-2.3" fill="none" stroke="#2b2b2b" stroke-width="1.9"/></svg>
<svg width="20" height="20" viewBox="-10 -10 20 20" style="left:244.0px;top:48.0px;"><rect x="-7.7" y="-6.7" width="15.4" height="13.7" fill="none" stroke="#222" stroke-width="1.3"/><circle cx="-7.7" cy="7" r="1.6" fill="#fff" stroke="#4f74c4" stroke-width="0.8"/><circle cx="7.7" cy="-6.7" r="1.6" fill="#fff" stroke="#4f74c4" stroke-width="0.8"/></svg>
<svg width="14" height="14" viewBox="-7 -7 14 14" style="left:271.7px;top:50.8px;"><path d="M-4.6,-2.3 L0,2.3 L4.6,-2.3" fill="none" stroke="#2b2b2b" stroke-width="1.9"/></svg>
<svg width="20" height="20" viewBox="-10 -10 20 20" style="left:295.7px;top:47.6px;"><circle r="8.8" fill="none" stroke="#222" stroke-width="1.2"/><circle cx="0" cy="0" r="1.6" fill="#fff" stroke="#4f74c4" stroke-width="0.8"/><circle cx="6.3" cy="-6.0" r="1.6" fill="#fff" stroke="#4f74c4" stroke-width="0.8"/></svg>
<svg width="14" height="14" viewBox="-7 -7 14 14" style="left:323.8px;top:50.8px;"><path d="M-4.6,-2.3 L0,2.3 L4.6,-2.3" fill="none" stroke="#2b2b2b" stroke-width="1.9"/></svg>
<svg width="20" height="20" viewBox="-10 -10 20 20" style="left:347.8px;top:48.0px;"><path d="M-7.3,3.7 A7.6,7.6 0 1 1 7.3,3.7" fill="none" stroke="#222" stroke-width="1.3"/><path d="M-1.8,2.7 H1.8 M0,0.9 V4.5" stroke="#222" stroke-width="0.9"/><circle cx="-7.3" cy="3.9" r="1.6" fill="#fff" stroke="#4f74c4" stroke-width="0.8"/><circle cx="7.3" cy="3.9" r="1.6" fill="#fff" stroke="#4f74c4" stroke-width="0.8"/><circle cx="0" cy="-6" r="1.6" fill="#fff" stroke="#4f74c4" stroke-width="0.8"/></svg>
<svg width="14" height="14" viewBox="-7 -7 14 14" style="left:375.7px;top:50.8px;"><path d="M-4.6,-2.3 L0,2.3 L4.6,-2.3" fill="none" stroke="#2b2b2b" stroke-width="1.9"/></svg>
<svg width="20" height="20" viewBox="-10 -10 20 20" style="left:399.5px;top:48.0px;"><path d="M0,-8.6 L8.3,-2.5 L5.2,7.3 H-5.2 L-8.3,-2.5 Z" fill="none" stroke="#333" stroke-width="1.4"/><circle r="7" fill="none" stroke="#2d5fb8" stroke-width="0.7"/><circle cx="0" cy="0.5" r="1.6" fill="#fff" stroke="#4f74c4" stroke-width="0.8"/><circle cx="5" cy="-5.2" r="1.6" fill="#fff" stroke="#4f74c4" stroke-width="0.8"/></svg>
<svg width="14" height="14" viewBox="-7 -7 14 14" style="left:427.8px;top:50.8px;"><path d="M-4.6,-2.3 L0,2.3 L4.6,-2.3" fill="none" stroke="#2b2b2b" stroke-width="1.9"/></svg>
<svg width="20" height="20" viewBox="-10 -10 20 20" style="left:452.0px;top:48.0px;"><path d="M-7.5,7 Q-6,1 -0.5,-0.5 Q5,-2 7,-7.5" fill="none" stroke="#333" stroke-width="1.3"/><circle cx="-7.5" cy="7" r="1.6" fill="#fff" stroke="#4f74c4" stroke-width="0.8"/><circle cx="-0.3" cy="-0.4" r="1.6" fill="#fff" stroke="#4f74c4" stroke-width="0.8"/><circle cx="7" cy="-7.5" r="1.6" fill="#fff" stroke="#4f74c4" stroke-width="0.8"/></svg>
<svg width="14" height="14" viewBox="-7 -7 14 14" style="left:479.8px;top:50.8px;"><path d="M-4.6,-2.3 L0,2.3 L4.6,-2.3" fill="none" stroke="#2b2b2b" stroke-width="1.9"/></svg>
<svg width="20" height="20" viewBox="-10 -10 20 20" style="left:503.7px;top:48.0px;"><circle r="3.2" fill="none" stroke="#2d5fb8" stroke-width="1.2"/></svg>
<svg width="20" height="20" viewBox="-10 -10 20 20" style="left:537.3px;top:48.0px;"><rect x="-7.8" y="-8" width="16.6" height="16" fill="none" stroke="#555" stroke-width="0.8" stroke-dasharray="1.6 1.2"/><text x="0.5" y="7.3" font-size="20" font-weight="bold" text-anchor="middle" fill="#fff" stroke="#333" stroke-width="1">A</text><circle cx="-8" cy="8" r="1.6" fill="#fff" stroke="#4f74c4" stroke-width="0.8"/><circle cx="8.7" cy="-8" r="1.6" fill="#fff" stroke="#4f74c4" stroke-width="0.8"/></svg>
<svg width="20" height="20" viewBox="-10 -10 20 20" style="left:572.0px;top:48.0px;"><path d="M-7.5,-7.5 H4.5 L7.5,-5 V7.5 H-4.5 L-7.5,5 Z M-4.5,7.5 V-4.7 H7.5 M-7.5,-7.5 L-4.5,-4.7" fill="none" stroke="#333" stroke-width="1.2" stroke-linejoin="round"/><path d="M-4.5,7.3 V-4.7" stroke="#2d5fb8" stroke-width="1.8"/></svg>
<svg width="14" height="14" viewBox="-7 -7 14 14" style="left:600.0px;top:50.8px;"><path d="M-4.6,-2.3 L0,2.3 L4.6,-2.3" fill="none" stroke="#2b2b2b" stroke-width="1.9"/></svg>
<svg width="20" height="20" viewBox="-10 -10 20 20" style="left:624.0px;top:48.0px;"><path d="M-7,-8 V8" stroke="#2d5fb8" stroke-width="1.8"/><path d="M7,-8 V8" stroke="#222" stroke-width="1.8" stroke-dasharray="3.5 2"/><path d="M4,-3.5 H-3" stroke="#222" stroke-width="1.2"/><path d="M-4.5,-3.5 l3,-2 v4 Z" fill="#222"/><path d="M-4,3.5 H3" stroke="#2d5fb8" stroke-width="1.2"/><path d="M4.5,3.5 l-3,-2 v4 Z" fill="#2d5fb8"/></svg>
<div class="a" style="left:652.3px;top:45.5px;width:1.5px;height:25.5px;background:#cdcdcd;"></div>
<svg width="20" height="20" viewBox="-10 -10 20 20" style="left:661.5px;top:48.0px;"><path d="M-7.3,8 V-8 H8" fill="none" stroke="#555" stroke-width="0.7" stroke-dasharray="1.5 1.2"/><path d="M-7.3,4 Q-6.8,-6.8 4,-8" fill="none" stroke="#222" stroke-width="1.5"/><path d="M-7.3,4 V8.5 M4,-8 H8.5" stroke="#2d5fb8" stroke-width="1.2"/></svg>
<svg width="14" height="14" viewBox="-7 -7 14 14" style="left:690.0px;top:50.8px;"><path d="M-4.6,-2.3 L0,2.3 L4.6,-2.3" fill="none" stroke="#2b2b2b" stroke-width="1.9"/></svg>
<svg width="20" height="20" viewBox="-10 -10 20 20" style="left:713.5px;top:48.0px;"><path d="M8,-6 L-2,1.2 M8,6.5 L-2,-0.8" stroke="#222" stroke-width="2"/><circle cx="-4.3" cy="-4" r="2.6" fill="none" stroke="#222" stroke-width="1.6"/><circle cx="-4.3" cy="4.4" r="2.6" fill="none" stroke="#222" stroke-width="1.6"/></svg>
<svg width="14" height="14" viewBox="-7 -7 14 14" style="left:742.0px;top:50.8px;"><path d="M-4.6,-2.3 L0,2.3 L4.6,-2.3" fill="none" stroke="#2b2b2b" stroke-width="1.9"/></svg>
<svg width="20" height="20" viewBox="-10 -10 20 20" style="left:765.5px;top:48.0px;"><path d="M-6.5,7 V-2 A4.7,4.7 0 0 1 3,-2 V0.8 H7 V7 H1" fill="none" stroke="#2d5fb8" stroke-width="1.1"/><path d="M-4,7 V-2 A2.3,2.3 0 0 1 0.5,-2 V3 H4.6 V4.6 H1" fill="none" stroke="#333" stroke-width="1.1"/></svg>
<svg width="14" height="14" viewBox="-7 -7 14 14" style="left:794.0px;top:50.8px;"><path d="M-4.6,-2.3 L0,2.3 L4.6,-2.3" fill="none" stroke="#2b2b2b" stroke-width="1.9"/></svg>
<svg width="20" height="20" viewBox="-10 -10 20 20" style="left:817.5px;top:48.0px;"><path d="M-8,-7.5 H-5.3 V4.7 H-1 V7.5 H-8 Z" fill="#999" stroke="#222" stroke-width="1.2"/><path d="M0.7,-8 V8" stroke="#333" stroke-width="0.9" stroke-dasharray="2.5 1.2 0.8 1.2"/><path d="M8,-7.5 H5.3 V4.7 H2.8 V7.5 H8 Z" fill="none" stroke="#2d5fb8" stroke-width="1.1"/></svg>
<svg width="20" height="20" viewBox="-10 -10 20 20" style="left:851.5px;top:48.0px;"><rect x="-7.8" y="-8" width="6.3" height="6.3" fill="#bbb" stroke="#333" stroke-width="1.2"/><rect x="1.6" y="-8" width="6.3" height="6.3" fill="none" stroke="#2d5fb8" stroke-width="1.1"/><rect x="-7.8" y="1.6" width="6.3" height="6.3" fill="none" stroke="#2d5fb8" stroke-width="1.1"/><rect x="1.6" y="1.6" width="6.3" height="6.3" fill="none" stroke="#2d5fb8" stroke-width="1.1"/></svg>
<svg width="14" height="14" viewBox="-7 -7 14 14" style="left:880.0px;top:50.8px;"><path d="M-4.6,-2.3 L0,2.3 L4.6,-2.3" fill="none" stroke="#2b2b2b" stroke-width="1.9"/></svg>
<svg width="20" height="20" viewBox="-10 -10 20 20" style="left:903.5px;top:48.0px;"><path d="M-7.5,-8.5 H3 L7.5,-4 V8.5 H-7.5 Z" fill="#fff" stroke="#222" stroke-width="1.2" stroke-linejoin="round"/><path d="M3,-8.5 V-4 H7.5" fill="none" stroke="#222" stroke-width="1"/><path d="M-4,-8.5 Q0,-8 0.3,-3.3" fill="none" stroke="#222" stroke-width="1.6"/><path d="M-2.5,-4.6 H3.3 L0.4,-1 Z" fill="#222"/><text x="0" y="6.8" font-size="6.6" font-weight="bold" text-anchor="middle" fill="#222" textLength="12">DXF</text></svg>
<svg width="14" height="14" viewBox="-7 -7 14 14" style="left:932.0px;top:50.8px;"><path d="M-4.6,-2.3 L0,2.3 L4.6,-2.3" fill="none" stroke="#2b2b2b" stroke-width="1.9"/></svg>
<div class="a" style="left:951.3px;top:45.5px;width:1.5px;height:25.5px;background:#cdcdcd;"></div>
<svg width="20" height="20" viewBox="-10 -10 20 20" style="left:959.5px;top:48.0px;"><path d="M-5.5,5 L5.5,-5.5" stroke="#222" stroke-width="1.5"/><path d="M-7,6.5 l1.2,-5.2 l4,4 Z M7,-7 l-1.2,5.2 l-4,-4 Z" fill="#222"/><path d="M-8.2,3.5 L-3.7,8.5 M4,-8.5 L8.5,-3.5" stroke="#222" stroke-width="0.9"/></svg>
<div class="a" style="left:989.3px;top:45.5px;width:1.5px;height:25.5px;background:#cdcdcd;"></div>
<svg width="20" height="20" viewBox="-10 -10 20 20" style="left:997.4px;top:48.0px;"><path d="M-8,7 L7,-8" stroke="#2d5fb8" stroke-width="1"/><path d="M-1,-1.5 L8.5,8" stroke="#222" stroke-width="1.9"/><circle cx="-0.7" cy="-0.9" r="1.9" fill="#222"/></svg>
<svg width="20" height="20" viewBox="-10 -10 20 20" style="left:1031.8px;top:48.0px;"><circle r="4" fill="none" stroke="#222" stroke-width="1.7"/><circle r="7.6" fill="none" stroke="#2d5fb8" stroke-width="1"/></svg>
<svg width="20" height="20" viewBox="-10 -10 20 20" style="left:1065.5px;top:48.0px;"><path d="M-8,-4.5 L4.5,8" stroke="#222" stroke-width="2"/><path d="M-4.5,-7.5 L8,5" stroke="#2d5fb8" stroke-width="1"/></svg>
<svg width="20" height="20" viewBox="-10 -10 20 20" style="left:1100.0px;top:48.0px;"><path d="M-8,7 L7.5,-8" stroke="#222" stroke-width="1.9"/><circle cx="3.5" cy="3" r="4.2" fill="none" stroke="#2d5fb8" stroke-width="1"/></svg>
<svg width="20" height="20" viewBox="-10 -10 20 20" style="left:1134.0px;top:48.0px;"><path d="M-8,0 H8" stroke="#222" stroke-width="1.9"/></svg>
<svg width="20" height="20" viewBox="-10 -10 20 20" style="left:1168.2px;top:48.0px;"><path d="M0,-8 V8" stroke="#222" stroke-width="1.9"/></svg>
<svg width="20" height="20" viewBox="-10 -10 20 20" style="left:1202.2px;top:48.0px;"><path d="M-8.5,7 H8.5" stroke="#222" stroke-width="1.9"/><path d="M0,7 V-8" stroke="#2d5fb8" stroke-width="1"/><path d="M0,1.5 H5 V7" fill="none" stroke="#222" stroke-width="0.9"/></svg>
<svg width="20" height="20" viewBox="-10 -10 20 20" style="left:1236.1px;top:48.0px;"><path d="M-5,-2.2 H5 M-5,2.2 H5" stroke="#222" stroke-width="1.8"/></svg>
<svg width="20" height="20" viewBox="-10 -10 20 20" style="left:1270.0px;top:48.0px;"><path d="M-8.5,0 H-3.5 M3.5,0 H8.5" stroke="#2d5fb8" stroke-width="1"/><circle r="2.1" fill="#222"/></svg>
<svg width="20" height="20" viewBox="-10 -10 20 20" style="left:1304.3px;top:48.0px;"><path d="M-7.5,-3.5 Q0,-2.5 2,8" fill="none" stroke="#2d5fb8" stroke-width="1"/><path d="M-1,-0.5 Q3,-3 5.5,-7.5" fill="none" stroke="#222" stroke-width="1.9"/></svg>
<svg width="20" height="20" viewBox="-10 -10 20 20" style="left:1337.5px;top:48.0px;"><path d="M-7,-8 Q-6,5 6,7.5" fill="none" stroke="#2d5fb8" stroke-width="1"/><path d="M-1.5,3.5 Q3,-3 7,-7" fill="none" stroke="#222" stroke-width="1.9"/><circle cx="-1.5" cy="3.8" r="2" fill="#222"/></svg>
<svg width="20" height="20" viewBox="-10 -10 20 20" style="left:1372.0px;top:48.0px;"><path d="M-2.5,-7 H-8 L-3.5,0 L-8,7 H-2.5" fill="none" stroke="#222" stroke-width="1.5"/><path d="M2.5,-7 H8 L3.5,0 L8,7 H2.5" fill="none" stroke="#2d5fb8" stroke-width="1"/><path d="M0,-8.5 V8.5" stroke="#222" stroke-width="0.9" stroke-dasharray="3 1.2 0.8 1.2"/></svg>
<svg width="20" height="20" viewBox="-10 -10 20 20" style="left:1405.2px;top:48.0px;"><path d="M-8,-1.5 H8" stroke="#2d5fb8" stroke-width="2"/><path d="M-6,3 l2.3,-3.5 M-3,3 l2.3,-3.5 M0,3 l2.3,-3.5 M3,3 l2.3,-3.5 M6,3 l2.3,-3.5" stroke="#2d5fb8" stroke-width="0.9"/></svg>
<svg width="20" height="20" viewBox="-10 -10 20 20" style="left:1439.7px;top:48.0px;"><path d="M-7.5,7.5 Q-6,-4 0,-4 Q6,-4 7.5,7.5" fill="none" stroke="#2d5fb8" stroke-width="1.8"/><path d="M-8.8,2 l-2,-0.8 M-7.5,-2 l-1.8,-1.5 M-5,-5 l-1.2,-2 M-2,-6.3 l-0.4,-2.3 M2,-6.3 l0.4,-2.3 M5,-5 l1.2,-2 M7.5,-2 l1.8,-1.5 M8.8,2 l2,-0.8" stroke="#555" stroke-width="0.8"/></svg>
<div class="a" style="left:1478.5px;top:42.5px;width:160.5px;height:31px;background:#f0f0f0;border-radius:4px;"></div>
<span class="t" style="left:1488.1px;top:49.0px;font-size:14.8px;line-height:18px;color:#2b2b2b;transform:scaleX(0.9154);">Search tools...</span>
<div class="a" style="left:1578.5px;top:50px;width:32px;height:18px;border:1px solid #8a8a8a;border-radius:3px;box-sizing:border-box;background:#f7f7f7;"></div>
<span class="t" style="left:1582.0px;top:52.8px;font-size:11px;line-height:13px;color:#333;transform:scaleX(1.0470);">alt/⌥</span>
<div class="a" style="left:1613px;top:50px;width:15.5px;height:18px;border:1px solid #8a8a8a;border-radius:3px;box-sizing:border-box;background:#f7f7f7;"></div>
<span class="t" style="left:1618.0px;top:52.5px;font-size:11px;line-height:13px;color:#333;transform:scaleX(1.0000);">c</span>
<svg width="22" height="22" viewBox="-11 -11 22 22" style="left:9.0px;top:47.0px;"><circle cx="-6.5" cy="-6" r="2.4" fill="none" stroke="#222" stroke-width="1.6"/><circle cx="-6.5" cy="7" r="1.8" fill="#222"/><circle cx="-1.2" cy="0.5" r="1.8" fill="#222"/><path d="M-6.5,-3.5 V6 M-6.5,4 Q-6.5,0.5 -1.5,0.5" fill="none" stroke="#222" stroke-width="1.5"/><path d="M-1,-6.5 H9 M3,0.5 H9 M-2,7 H9 M2,-3 H9 M2,3.8 H9" stroke="#222" stroke-width="1.5"/></svg>
<svg width="22" height="22" viewBox="-11 -11 22 22" style="left:9.0px;top:82.0px;"><path d="M-4,-9 V9" stroke="#222" stroke-width="1.5" stroke-dasharray="2 1.5"/><circle cx="-4" cy="0" r="3" fill="#222"/><path d="M1.5,5 H9 M5.2,1.3 V8.7" stroke="#1c58b9" stroke-width="2"/></svg>
<svg width="22" height="22" viewBox="-11 -11 22 22" style="left:9.0px;top:116.5px;"><ellipse cx="0" cy="-1.5" rx="9.5" ry="6.6" fill="#222"/><path d="M-5,3 L-8,8 L0,4.5 Z" fill="#222"/></svg>
<svg width="22" height="22" viewBox="-11 -11 22 22" style="left:9.0px;top:152.0px;"><path d="M3,-8 H-6 Q-7.5,-8 -7.5,-6.5 V6.5 Q-7.5,8 -6,8 H4 Q5.5,8 5.5,6.5 V2" fill="none" stroke="#222" stroke-width="1.6"/><path d="M-4.5,-4 H2 M-4.5,-0.5 H0 M-4.5,3 H-1" stroke="#222" stroke-width="1.4"/><path d="M0.5,4.5 L1.5,1 L7,-6 L9.3,-4 L3.8,3 Z" fill="#222"/></svg>
<svg width="22" height="22" viewBox="-11 -11 22 22" style="left:9.0px;top:187.0px;"><circle cx="2" cy="1.5" r="6.8" fill="none" stroke="#222" stroke-width="1.6"/><path d="M2,1.5 L5,-2 M-0.5,-8.5 H4.5 M2,-8.5 V-5.5 M-9.5,-2 H-5 M-8,1.5 H-5 M-9.5,5 H-4" stroke="#222" stroke-width="1.4" fill="none"/></svg>
<svg width="22" height="22" viewBox="-11 -11 22 22" style="left:9.0px;top:222.0px;"><circle r="9" fill="#222"/><path d="M5,6 L10,10 L9,5 Z" fill="#222"/><path d="M0,-6 L5.2,-3 V3 L0,6 L-5.2,3 V-3 Z" fill="none" stroke="#f6f6f6" stroke-width="1.4"/><path d="M0,-2.8 L2.5,-1.4 V1.4 L0,2.8 L-2.5,1.4 V-1.4 Z" fill="none" stroke="#f6f6f6" stroke-width="1"/></svg>
<div class="a" style="left:0px;top:251px;width:40px;height:1px;background:#d0d0d0;"></div>
<svg width="22" height="22" viewBox="-11 -11 22 22" style="left:9.0px;top:257.0px;"><rect x="-7" y="-8" width="14" height="16" rx="1.5" fill="none" stroke="#222" stroke-width="1.6"/><path d="M-4.8,-4.5 l1.3,1.3 l2,-2.6 M-4.8,0 l1.3,1.3 l2,-2.6 M-4.8,4.5 l1.3,1.3 l2,-2.6 M0.8,-4 H4.8 M0.8,0.5 H4.8 M0.8,5 H4.8" fill="none" stroke="#222" stroke-width="1.3"/></svg>
<svg width="22" height="22" viewBox="-11 -11 22 22" style="left:9.0px;top:1055.5px;"><path d="M-9,-7 H8 V0 M-9,-7 V1 L-6,3.5 H-3" fill="#222" stroke="#222" stroke-width="1"/><path d="M-9,-7 H8 V-2 H-2 Q-5,0 -4,3.5 L-6,3.5 L-9,1 Z" fill="#222"/><circle cx="2" cy="2.5" r="4.3" fill="#f6f6f6" stroke="#222" stroke-width="1.8"/><path d="M5.2,5.8 L9,9.5" stroke="#222" stroke-width="2.2"/></svg>
<svg width="20" height="20" viewBox="-10 -10 20 20" style="left:48.5px;top:90.0px;"><path d="M-6.8,-6.5 H6.8 L1.5,0.5 V7 L-1.5,5.3 V0.5 Z" fill="none" stroke="#222" stroke-width="1.4" stroke-linejoin="round"/></svg>
<div class="a" style="left:79.5px;top:84.5px;width:157px;height:29px;border:1px solid #9a9a9a;border-radius:3px;box-sizing:border-box;background:#fff;"></div>
<span class="t" style="left:85.6px;top:92.0px;font-size:13.3px;line-height:16px;color:#777;transform:scaleX(0.9603);font-style:italic;">Filter by name or type</span>
<span class="t" style="left:44.4px;top:123.2px;font-size:13.5px;line-height:16px;color:#222;transform:scaleX(0.9473);font-weight:bold;">Features (23)</span>
<svg width="20" height="20" viewBox="-10 -10 20 20" style="left:145.0px;top:119.2px;"><path d="M-7.5,-5.5 H-2.5 L-1,-3.8 H8 V6.5 H-1" fill="none" stroke="#a5a5a5" stroke-width="1.2"/><path d="M-7.5,-5.5 V-2.5 M-7.5,4.5 V6.5 H-5.5" fill="none" stroke="#a5a5a5" stroke-width="1.2"/><path d="M-8,2 H-1.5 M-4.7,-1.3 V5.2" stroke="#6d8fd6" stroke-width="1.5"/></svg>
<div class="a" style="left:179.5px;top:122.7px;width:4px;height:14px;background:#9c9c9c;"></div>
<div class="a" style="left:187px;top:122.7px;width:4px;height:14px;background:#9c9c9c;"></div>
<svg width="20" height="20" viewBox="-10 -10 20 20" style="left:205.0px;top:119.6px;"><circle cx="0" cy="1.2" r="6.6" fill="none" stroke="#222" stroke-width="1.7"/><path d="M-2.3,-8 H2.3 M0,-8 V-5.5 M0,1.2 L2.8,4 M5,-5 L6.3,-6.3" stroke="#222" stroke-width="1.6" fill="none"/></svg>
<div class="a" style="left:40px;top:143px;width:204px;height:880px;overflow:hidden;">
<div class="a" style="left:19px;top:43.5px;width:181px;height:25.5px;background:#f4f4f4;"></div>
<div class="a" style="left:0px;top:200px;width:200px;height:23.5px;background:#eef2f6;border-bottom:1px solid #9fd0f0;"></div>
<div class="a" style="left:0px;top:304.5px;width:200px;height:23.5px;background:#b2dbf5;"></div>
<div class="a" style="left:9px;top:-3px;width:1px;height:19.5px;background:#cfcfcf;"></div>
<div class="a" style="left:4.5px;top:16px;width:9.5px;height:1px;background:#cfcfcf;"></div>
<div class="a" style="left:9px;top:43px;width:1px;height:25.5px;background:#cfcfcf;"></div>
<div class="a" style="left:4.5px;top:68px;width:9.5px;height:1px;background:#cfcfcf;"></div>
<div class="a" style="left:9px;top:95px;width:1px;height:104.5px;background:#cfcfcf;"></div>
<div class="a" style="left:4.5px;top:199px;width:9.5px;height:1px;background:#cfcfcf;"></div>
<div class="a" style="left:9px;top:225px;width:1px;height:180px;background:#cfcfcf;"></div>
<div class="a" style="left:4.5px;top:405px;width:9.5px;height:1px;background:#cfcfcf;"></div>
<div class="a" style="left:9px;top:485px;width:1px;height:79px;background:#cfcfcf;"></div>
<svg width="17" height="17" viewBox="-8.5 -8.5 17.0 17.0" style="left:24.5px;top:-3.6px;"><path d="M-7,-7 L6.5,-4.5 V7 L-7,5 Z" fill="#e9e9e9" stroke="#b4b4b4" stroke-width="1.1" stroke-linejoin="round"/><path d="M-1.5,-6 V-1 L6.5,0.5" fill="none" stroke="#b4b4b4" stroke-width="0.9"/></svg>
<span class="t" style="left:45.6px;top:-2.8px;font-size:13.4px;line-height:16px;color:#9a9a9a;transform:scaleX(0.8631);">Right</span>
<svg width="17" height="17" viewBox="-8.5 -8.5 17.0 17.0" style="left:24.5px;top:21.7px;"><path d="M0,-7.8 L7,-4 V4 L0,7.8 L-7,4 V-4 Z M-7,-4 L0,-0.2 L7,-4 M0,-0.2 V7.8" fill="none" stroke="#b4b4b4" stroke-width="1.1" stroke-linejoin="round"/></svg>
<span class="t" style="left:46.3px;top:22.5px;font-size:13.4px;line-height:16px;color:#9a9a9a;transform:scaleX(0.9440);">Origin Cube</span>
<svg width="14" height="14" viewBox="-7 -7 14 14" style="left:3.3px;top:23.5px;"><path d="M-5,-2.6 L0,2.5 L5,-2.6" fill="none" stroke="#555" stroke-width="1.9"/></svg>
<svg width="20" height="20" viewBox="-10 -10 20 20" style="left:150.2px;top:19.4px;"><circle r="2.9" fill="#222"/><path d="M0,-8.5 V8.5" stroke="#222" stroke-width="1.5" stroke-dasharray="1.6 1.5"/></svg>
<svg width="17" height="17" viewBox="-8.5 -8.5 17.0 17.0" style="left:24.5px;top:47.5px;"><circle r="7.6" fill="none" stroke="#b4b4b4" stroke-width="1"/><circle r="5.4" fill="none" stroke="#b4b4b4" stroke-width="1"/><path d="M0,-5.4 V0 H5.4" fill="none" stroke="#b4b4b4" stroke-width="1"/></svg>
<span class="t" style="left:45.6px;top:48.3px;font-size:13.4px;line-height:16px;color:#9a9a9a;transform:scaleX(0.9659);">Mate connector 1</span>
<svg width="17" height="17" viewBox="-8.5 -8.5 17.0 17.0" style="left:24.5px;top:73.5px;"><path d="M-7.5,-6 H-2 L-0.5,-4.2 H7.5 V6 H-7.5 Z" fill="none" stroke="#444" stroke-width="1.1" stroke-linejoin="round"/></svg>
<span class="t" style="left:46.5px;top:74.3px;font-size:13.4px;line-height:16px;color:#222;transform:scaleX(0.9429);">Tubes (4)</span>
<svg width="14" height="14" viewBox="-7 -7 14 14" style="left:3.3px;top:75.3px;"><path d="M-5,-2.6 L0,2.5 L5,-2.6" fill="none" stroke="#555" stroke-width="1.9"/></svg>
<svg width="17" height="17" viewBox="-8.5 -8.5 17.0 17.0" style="left:24.5px;top:99.5px;"><path d="M-7,-7 L6.5,-4.5 V7 L-7,5 Z" fill="#e9e9e9" stroke="#b4b4b4" stroke-width="1.1" stroke-linejoin="round"/><path d="M-1.5,-6 V-1 L6.5,0.5" fill="none" stroke="#b4b4b4" stroke-width="0.9"/></svg>
<span class="t" style="left:45.6px;top:100.3px;font-size:13.4px;line-height:16px;color:#9a9a9a;transform:scaleX(0.9790);">Offset Plate</span>
<svg width="17" height="17" viewBox="-8.5 -8.5 17.0 17.0" style="left:24.5px;top:125.7px;"><path d="M-3.5,3.8 L-4.5,6 L-2.3,5.2 L6.8,-4.5 L5,-6 Z" fill="none" stroke="#b4b4b4" stroke-width="1.1" stroke-linejoin="round"/><path d="M-8,7.3 H5" stroke="#9aa8d8" stroke-width="1"/></svg>
<span class="t" style="left:45.6px;top:126.5px;font-size:13.4px;line-height:16px;color:#9a9a9a;transform:scaleX(0.9635);">Tube Sketch</span>
<svg width="17" height="17" viewBox="-8.5 -8.5 17.0 17.0" style="left:24.5px;top:151.8px;"><path d="M-7.5,-7.5 H4.5 L7.5,-5 V7.5 H-4.5 L-7.5,5 Z" fill="#fff" stroke="#222" stroke-width="1.1" stroke-linejoin="round"/><path d="M-4.8,7.5 V-4.8 H7.3 M-7.5,-7.5 L-4.8,-4.8" fill="none" stroke="#222" stroke-width="0.8"/><rect x="-2.2" y="-2.2" width="9.7" height="9.7" fill="#8d8d8d" stroke="#444" stroke-width="0.9"/></svg>
<span class="t" style="left:45.6px;top:152.6px;font-size:13.4px;line-height:16px;color:#222;transform:scaleX(0.9631);">Tube Extrude</span>
<svg width="17" height="17" viewBox="-8.5 -8.5 17.0 17.0" style="left:24.5px;top:177.8px;"><path d="M-7.5,-7.5 H3 L7.5,-4.5 V7.5 H-3.5 L-7.5,5 Z" fill="#bdbdbd" stroke="#222" stroke-width="1.1" stroke-linejoin="round"/><path d="M-3.5,7.5 V-4.5 H7.5 M-7.5,-7.5 L-3.5,-4.5" fill="none" stroke="#222" stroke-width="0.9"/><circle cx="-5.5" cy="-2" r="1" fill="#fff"/><circle cx="-5.5" cy="2.5" r="1" fill="#fff"/><circle cx="0" cy="0" r="1.3" fill="#fff"/><circle cx="4" cy="0" r="1.3" fill="#fff"/><circle cx="0" cy="4" r="1.3" fill="#fff"/><path d="M1.5,6.5 L6.5,-3" stroke="#fff" stroke-width="1.5"/></svg>
<span class="t" style="left:45.6px;top:178.6px;font-size:13.4px;line-height:16px;color:#222;transform:scaleX(0.9551);">2x1 Convert</span>
<svg width="20" height="20" viewBox="-10 -10 20 20" style="left:150.2px;top:175.5px;"><circle r="2.9" fill="#222"/><path d="M0,-8.5 V8.5" stroke="#222" stroke-width="1.5" stroke-dasharray="1.6 1.5"/></svg>
<svg width="17" height="17" viewBox="-8.5 -8.5 17.0 17.0" style="left:24.5px;top:203.8px;"><path d="M-7.5,-6 H-2 L-0.5,-4.2 H7.5 V6 H-7.5 Z" fill="none" stroke="#444" stroke-width="1.1" stroke-linejoin="round"/></svg>
<span class="t" style="left:46.3px;top:204.6px;font-size:13.4px;line-height:16px;color:#222;transform:scaleX(0.9592);">Plates (7)</span>
<svg width="14" height="14" viewBox="-7 -7 14 14" style="left:3.3px;top:205.6px;"><path d="M-5,-2.6 L0,2.5 L5,-2.6" fill="none" stroke="#555" stroke-width="1.9"/></svg>
<svg width="17" height="17" viewBox="-8.5 -8.5 17.0 17.0" style="left:24.5px;top:229.8px;"><path d="M-3.5,3.8 L-4.5,6 L-2.3,5.2 L6.8,-4.5 L5,-6 Z" fill="none" stroke="#2b2b2b" stroke-width="1.1" stroke-linejoin="round"/><path d="M-8,7.3 H5" stroke="#5b7fd0" stroke-width="1"/></svg>
<span class="t" style="left:45.6px;top:230.6px;font-size:13.4px;line-height:16px;color:#222;transform:scaleX(0.9739);">Layout Sketch</span>
<svg width="17" height="17" viewBox="-8.5 -8.5 17.0 17.0" style="left:24.5px;top:255.8px;"><path d="M-3.5,3.8 L-4.5,6 L-2.3,5.2 L6.8,-4.5 L5,-6 Z" fill="none" stroke="#b4b4b4" stroke-width="1.1" stroke-linejoin="round"/><path d="M-8,7.3 H5" stroke="#9aa8d8" stroke-width="1"/></svg>
<span class="t" style="left:45.6px;top:256.6px;font-size:13.4px;line-height:16px;color:#9a9a9a;transform:scaleX(0.9571);">Outer Plate Sk</span>
<svg width="17" height="17" viewBox="-8.5 -8.5 17.0 17.0" style="left:24.5px;top:281.7px;"><path d="M-7.5,-7.5 H4.5 L7.5,-5 V7.5 H-4.5 L-7.5,5 Z" fill="#fff" stroke="#222" stroke-width="1.1" stroke-linejoin="round"/><path d="M-4.8,7.5 V-4.8 H7.3 M-7.5,-7.5 L-4.8,-4.8" fill="none" stroke="#222" stroke-width="0.8"/><rect x="-2.2" y="-2.2" width="9.7" height="9.7" fill="#8d8d8d" stroke="#444" stroke-width="0.9"/></svg>
<span class="t" style="left:45.6px;top:282.5px;font-size:13.4px;line-height:16px;color:#222;transform:scaleX(0.9679);">Outer Plate</span>
<svg width="17" height="17" viewBox="-8.5 -8.5 17.0 17.0" style="left:24.5px;top:307.8px;"><path d="M-3.5,3.8 L-4.5,6 L-2.3,5.2 L6.8,-4.5 L5,-6 Z" fill="none" stroke="#555" stroke-width="1.1" stroke-linejoin="round"/><path d="M-8,7.3 H5" stroke="#9aa8d8" stroke-width="1"/></svg>
<span class="t" style="left:45.6px;top:308.6px;font-size:13.4px;line-height:16px;color:#4f6b7d;transform:scaleX(0.9659);font-weight:bold;">Inner Plate Sk</span>
<svg width="17" height="17" viewBox="-8.5 -8.5 17.0 17.0" style="left:24.5px;top:333.9px;"><path d="M-7.5,-7.5 H4.5 L7.5,-5 V7.5 H-4.5 L-7.5,5 Z" fill="#fff" stroke="#b4b4b4" stroke-width="1.1" stroke-linejoin="round"/><path d="M-4.8,7.5 V-4.8 H7.3 M-7.5,-7.5 L-4.8,-4.8" fill="none" stroke="#b4b4b4" stroke-width="0.8"/><rect x="-2.2" y="-2.2" width="9.7" height="9.7" fill="#c4c4c4" stroke="#aaa" stroke-width="0.9"/></svg>
<span class="t" style="left:46.0px;top:334.7px;font-size:13.4px;line-height:16px;color:#9a9a9a;transform:scaleX(0.9783);font-style:italic;">Inner Plate</span>
<svg width="17" height="17" viewBox="-8.5 -8.5 17.0 17.0" style="left:24.5px;top:359.8px;"><path d="M-3.5,3.8 L-4.5,6 L-2.3,5.2 L6.8,-4.5 L5,-6 Z" fill="none" stroke="#b4b4b4" stroke-width="1.1" stroke-linejoin="round"/><path d="M-8,7.3 H5" stroke="#9aa8d8" stroke-width="1"/></svg>
<span class="t" style="left:46.0px;top:360.6px;font-size:13.4px;line-height:16px;color:#9a9a9a;transform:scaleX(0.9713);font-style:italic;">Crush Plate</span>
<svg width="17" height="17" viewBox="-8.5 -8.5 17.0 17.0" style="left:24.5px;top:385.8px;"><path d="M-7.5,-7.5 H4.5 L7.5,-5 V7.5 H-4.5 L-7.5,5 Z" fill="#fff" stroke="#b4b4b4" stroke-width="1.1" stroke-linejoin="round"/><path d="M-4.8,7.5 V-4.8 H7.3 M-7.5,-7.5 L-4.8,-4.8" fill="none" stroke="#b4b4b4" stroke-width="0.8"/><rect x="-2.2" y="-2.2" width="9.7" height="9.7" fill="#c4c4c4" stroke="#aaa" stroke-width="0.9"/></svg>
<span class="t" style="left:46.0px;top:386.6px;font-size:13.4px;line-height:16px;color:#9a9a9a;transform:scaleX(0.9713);font-style:italic;">Crush Plate</span>
<svg width="17" height="17" viewBox="-8.5 -8.5 17.0 17.0" style="left:4.5px;top:411.3px;"><g transform="rotate(-7)"><rect x="-8" y="-3.2" width="16" height="10.4" rx="1.8" fill="#a8a8a8"/><circle cx="-3.4" cy="1.3" r="2.7" fill="#fff"/><circle cx="3.4" cy="1.3" r="2.7" fill="#fff"/><circle cx="-3" cy="1.6" r="1.25" fill="#a8a8a8"/><circle cx="3.8" cy="1.6" r="1.25" fill="#a8a8a8"/><path d="M0.3,-3 V-7.5" stroke="#a8a8a8" stroke-width="1.5"/><path d="M-4.2,-7 l1.2,1.6 M-1.6,-8 v2 M2.2,-8 v2 M4.8,-7 l-1.2,1.6" stroke="#a8a8a8" stroke-width="0.9"/></g></svg>
<span class="t" style="left:26.7px;top:412.1px;font-size:13.4px;line-height:16px;color:#9a9a9a;transform:scaleX(0.9850);font-style:italic;">First Stage Shaft</span>
<svg width="20" height="20" viewBox="-10 -10 20 20" style="left:150.2px;top:409.0px;"><circle r="2.9" fill="#222"/><path d="M0,-8.5 V8.5" stroke="#222" stroke-width="1.5" stroke-dasharray="1.6 1.5"/></svg>
<svg width="17" height="17" viewBox="-8.5 -8.5 17.0 17.0" style="left:4.5px;top:437.8px;"><g transform="rotate(-7)"><rect x="-8" y="-3.2" width="16" height="10.4" rx="1.8" fill="#a8a8a8"/><circle cx="-3.4" cy="1.3" r="2.7" fill="#fff"/><circle cx="3.4" cy="1.3" r="2.7" fill="#fff"/><circle cx="-3" cy="1.6" r="1.25" fill="#a8a8a8"/><circle cx="3.8" cy="1.6" r="1.25" fill="#a8a8a8"/><path d="M0.3,-3 V-7.5" stroke="#a8a8a8" stroke-width="1.5"/><path d="M-4.2,-7 l1.2,1.6 M-1.6,-8 v2 M2.2,-8 v2 M4.8,-7 l-1.2,1.6" stroke="#a8a8a8" stroke-width="0.9"/></g></svg>
<span class="t" style="left:26.7px;top:438.6px;font-size:13.4px;line-height:16px;color:#9a9a9a;transform:scaleX(0.9863);font-style:italic;">Output Shaft</span>
<svg width="20" height="20" viewBox="-10 -10 20 20" style="left:150.2px;top:435.5px;"><circle r="2.9" fill="#222"/><path d="M0,-8.5 V8.5" stroke="#222" stroke-width="1.5" stroke-dasharray="1.6 1.5"/></svg>
<svg width="17" height="17" viewBox="-8.5 -8.5 17.0 17.0" style="left:24.5px;top:463.8px;"><path d="M-7.5,-6 H-2 L-0.5,-4.2 H7.5 V6 H-7.5 Z" fill="none" stroke="#444" stroke-width="1.1" stroke-linejoin="round"/></svg>
<span class="t" style="left:46.0px;top:464.6px;font-size:13.4px;line-height:16px;color:#222;transform:scaleX(0.9627);">Pocketing (5)</span>
<svg width="14" height="14" viewBox="-7 -7 14 14" style="left:3.3px;top:465.6px;"><path d="M-5,-2.6 L0,2.5 L5,-2.6" fill="none" stroke="#555" stroke-width="1.9"/></svg>
<svg width="17" height="17" viewBox="-8.5 -8.5 17.0 17.0" style="left:24.5px;top:489.8px;"><path d="M-3.5,3.8 L-4.5,6 L-2.3,5.2 L6.8,-4.5 L5,-6 Z" fill="none" stroke="#b4b4b4" stroke-width="1.1" stroke-linejoin="round"/><path d="M-8,7.3 H5" stroke="#9aa8d8" stroke-width="1"/></svg>
<span class="t" style="left:46.0px;top:490.6px;font-size:13.4px;line-height:16px;color:#9a9a9a;transform:scaleX(0.9738);font-style:italic;">Outer Plate</span>
<svg width="17" height="17" viewBox="-8.5 -8.5 17.0 17.0" style="left:24.5px;top:515.8px;"><circle cx="0" cy="-0.3" r="4.7" fill="none" stroke="#a8a8a8" stroke-width="2.1"/><path d="M-8,-7.8 L-3.6,-4 M8,-7.8 L3.6,-4 M-5.6,6.2 L-3.2,3.4 M5.6,6.2 L3.2,3.4" stroke="#a8a8a8" stroke-width="2" fill="none"/><path d="M-8.3,7 H8.3" stroke="#a8a8a8" stroke-width="2.4"/></svg>
<span class="t" style="left:46.0px;top:516.6px;font-size:13.4px;line-height:16px;color:#9a9a9a;transform:scaleX(0.9624);font-style:italic;">Part Lightening...</span>
<svg width="20" height="20" viewBox="-10 -10 20 20" style="left:150.2px;top:513.5px;"><circle r="2.9" fill="#222"/><path d="M0,-8.5 V8.5" stroke="#222" stroke-width="1.5" stroke-dasharray="1.6 1.5"/></svg>
<svg width="17" height="17" viewBox="-8.5 -8.5 17.0 17.0" style="left:24.5px;top:541.8px;"><path d="M-3.5,3.8 L-4.5,6 L-2.3,5.2 L6.8,-4.5 L5,-6 Z" fill="none" stroke="#b4b4b4" stroke-width="1.1" stroke-linejoin="round"/><path d="M-8,7.3 H5" stroke="#9aa8d8" stroke-width="1"/></svg>
<span class="t" style="left:46.0px;top:542.6px;font-size:13.4px;line-height:16px;color:#9a9a9a;transform:scaleX(0.9783);font-style:italic;">Inner Plate</span>
<span class="t" style="left:23.4px;top:571.5px;font-size:13.4px;line-height:16px;color:#222;transform:scaleX(0.9655);">Parts (3)</span>
<svg width="14" height="14" viewBox="-7 -7 14 14" style="left:3.3px;top:572.5px;"><path d="M-5,-2.6 L0,2.5 L5,-2.6" fill="none" stroke="#555" stroke-width="1.9"/></svg>
<svg width="17" height="17" viewBox="-8.5 -8.5 17.0 17.0" style="left:23.8px;top:596.6px;"><path d="M-2.5,-7 H6.5 V4.5 L3.5,7.2 H-7 V-0.5 L-4.5,-2.5 H-2.5 Z" fill="#fff" stroke="#b4b4b4" stroke-width="1.1" stroke-linejoin="round"/><path d="M-7,-0.3 H1 V-4.6 H6.3 M1,-0.3 L3.8,-2.6 M-2.3,-6.8 L1,-4.6 M3.5,7 V-2.6" fill="none" stroke="#b4b4b4" stroke-width="0.8"/></svg>
<span class="t" style="left:45.3px;top:597.4px;font-size:13.4px;line-height:16px;color:#9a9a9a;transform:scaleX(0.9440);">Origin Cube</span>
<svg width="17" height="17" viewBox="-8.5 -8.5 17.0 17.0" style="left:23.8px;top:622.6px;"><path d="M-2.5,-7 H6.5 V4.5 L3.5,7.2 H-7 V-0.5 L-4.5,-2.5 H-2.5 Z" fill="#fff" stroke="#222" stroke-width="1.1" stroke-linejoin="round"/><path d="M-7,-0.3 H1 V-4.6 H6.3 M1,-0.3 L3.8,-2.6 M-2.3,-6.8 L1,-4.6 M3.5,7 V-2.6" fill="none" stroke="#222" stroke-width="0.8"/></svg>
<span class="t" style="left:45.3px;top:623.4px;font-size:13.4px;line-height:16px;color:#222;transform:scaleX(0.9754);">Tube 2"x1"x16"</span>
<svg width="17" height="17" viewBox="-8.5 -8.5 17.0 17.0" style="left:23.8px;top:648.6px;"><path d="M-2.5,-7 H6.5 V4.5 L3.5,7.2 H-7 V-0.5 L-4.5,-2.5 H-2.5 Z" fill="#fff" stroke="#222" stroke-width="1.1" stroke-linejoin="round"/><path d="M-7,-0.3 H1 V-4.6 H6.3 M1,-0.3 L3.8,-2.6 M-2.3,-6.8 L1,-4.6 M3.5,7 V-2.6" fill="none" stroke="#222" stroke-width="0.8"/></svg>
<span class="t" style="left:45.3px;top:649.4px;font-size:13.4px;line-height:16px;color:#222;transform:scaleX(0.9600);">Large Gearbox Plate</span>
<div class="a" style="left:0px;top:564.6px;width:200px;height:1px;background:#cfcfcf;"></div>
</div>
<div class="a" style="left:41px;top:140px;width:203px;height:4px;background:#fff;"></div>
<div class="a" style="left:246px;top:539px;width:31.5px;height:32px;background:#fff;border:1px solid #c9c9c9;border-left:none;box-sizing:border-box;"></div>
<svg width="20" height="20" viewBox="-10 -10 20 20" style="left:252.0px;top:545.5px;"><path d="M-5.5,-7 H7.5 M-2,-2.5 H7.5 M-2,2 H7.5 M-2,6.5 H7.5 M-5.5,-7 V8" stroke="#333" stroke-width="1.3" fill="none"/><path d="M-8.5,-7.8 L-6.5,-5.8 L-4.5,-7.8" stroke="#333" stroke-width="1.1" fill="none"/></svg>
<div class="a" style="left:258px;top:79px;width:220px;height:220px;background:#fff;box-shadow:0 1px 5px rgba(0,0,0,0.28);"></div>
<div class="a" style="left:258px;top:107px;width:220px;height:1px;background:#d9d9d9;"></div>
<span class="t" style="left:264.3px;top:85.0px;font-size:13.5px;line-height:16px;color:#222;transform:scaleX(0.9184);font-weight:bold;">Inner Plate Sk</span>
<div class="a" style="left:422px;top:79px;width:28px;height:28px;background:#0f8f12;"></div>
<svg width="20" height="20" viewBox="-10 -10 20 20" style="left:426.0px;top:83.0px;"><path d="M-6.5,0 L-2.2,4.5 L6.5,-4.8" fill="none" stroke="#fff" stroke-width="3"/></svg>
<svg width="16" height="16" viewBox="-8 -8 16 16" style="left:456.0px;top:86.0px;"><path d="M-5.2,-5.2 L5.2,5.2 M5.2,-5.2 L-5.2,5.2" stroke="#c4232b" stroke-width="2.8"/></svg>
<div class="a" style="left:261.5px;top:113.5px;width:187px;height:43px;border:1px solid #d4d4d4;border-radius:2px;box-sizing:border-box;background:#fff;"></div>
<span class="t" style="left:267.0px;top:118.1px;font-size:10.6px;line-height:13px;color:#555;transform:scaleX(0.9463);">Sketch plane</span>
<span class="t" style="left:268.1px;top:137.3px;font-size:13.4px;line-height:16px;color:#5a5a5a;transform:scaleX(0.9648);">Face of Tube Extrude</span>
<svg width="12" height="12" viewBox="-6 -6 12 12" style="left:427.0px;top:139.3px;"><path d="M-3.8,-3.8 L3.8,3.8 M3.8,-3.8 L-3.8,3.8" stroke="#555" stroke-width="1.1"/></svg>
<svg width="20" height="20" viewBox="-10 -10 20 20" style="left:452.0px;top:116.0px;"><circle r="8.8" fill="none" stroke="#333" stroke-width="1"/><circle r="6.4" fill="none" stroke="#333" stroke-width="1"/><path d="M0,-6.4 V0 H6.4" fill="none" stroke="#333" stroke-width="1"/></svg>
<div class="a" style="left:262px;top:170.39999999999998px;width:11.6px;height:11.6px;background:#1c58b9;border-radius:2px;"></div>
<svg width="12" height="12" viewBox="-6 -6 12 12" style="left:261.8px;top:170.2px;"><path d="M-3,0 L-0.9,2.3 L3.2,-2.5" fill="none" stroke="#fff" stroke-width="1.7"/></svg>
<span class="t" style="left:278.3px;top:168.4px;font-size:13.4px;line-height:16px;color:#444;transform:scaleX(0.9953);">Disable imprinting</span>
<div class="a" style="left:262px;top:197.7px;width:11.6px;height:11.6px;background:#fff;border:1px solid #767676;border-radius:2px;box-sizing:border-box;"></div>
<span class="t" style="left:278.3px;top:195.8px;font-size:13.4px;line-height:16px;color:#444;transform:scaleX(0.9899);">Show constraints</span>
<div class="a" style="left:262px;top:225.2px;width:11.6px;height:11.6px;background:#1c58b9;border-radius:2px;"></div>
<svg width="12" height="12" viewBox="-6 -6 12 12" style="left:261.8px;top:225.0px;"><path d="M-3,0 L-0.9,2.3 L3.2,-2.5" fill="none" stroke="#fff" stroke-width="1.7"/></svg>
<span class="t" style="left:278.3px;top:223.2px;font-size:13.4px;line-height:16px;color:#444;transform:scaleX(0.9683);">Show expressions</span>
<div class="a" style="left:262px;top:252.39999999999998px;width:11.6px;height:11.6px;background:#1c58b9;border-radius:2px;"></div>
<svg width="12" height="12" viewBox="-6 -6 12 12" style="left:261.8px;top:252.2px;"><path d="M-3,0 L-0.9,2.3 L3.2,-2.5" fill="none" stroke="#fff" stroke-width="1.7"/></svg>
<span class="t" style="left:278.3px;top:250.5px;font-size:13.4px;line-height:16px;color:#444;transform:scaleX(0.9857);">Show errors</span>
<div class="a" style="left:377px;top:274.5px;width:21.5px;height:21px;border:1px solid #9a9a9a;border-radius:3px;box-sizing:border-box;background:#fff;"></div>
<svg width="20" height="20" viewBox="-10 -10 20 20" style="left:377.7px;top:275.0px;"><circle cx="-0.3" cy="-0.3" r="6.6" fill="none" stroke="#222" stroke-width="1.1"/><path d="M-2.5,3 L-3.2,5 L-1.3,4.3 L5.3,-3.7 L3.8,-5 Z" fill="#fff" stroke="#222" stroke-width="1"/><path d="M-7.5,3.3 H4" stroke="#2d5fb8" stroke-width="0.9"/><path d="M4.5,4.8 L8,8" stroke="#222" stroke-width="1.6"/></svg>
<div class="a" style="left:403px;top:274.5px;width:48.5px;height:21px;border:1px solid #9a9a9a;border-radius:3px;box-sizing:border-box;background:#fff;"></div>
<span class="t" style="left:414.5px;top:277.3px;font-size:13.4px;line-height:16px;color:#222;transform:scaleX(0.8952);">Final</span>
<svg width="14" height="14" viewBox="-7 -7 14 14" style="left:460.0px;top:281.0px;"><circle r="6.5" fill="#a9a9a9"/><text x="0" y="3.8" font-size="10.5" font-weight="bold" fill="#fff" text-anchor="middle">?</text></svg>
<div class="a" style="left:40px;top:1050px;width:33.5px;height:29px;background:#cbcbcb;"></div>
<svg width="18" height="18" viewBox="-9 -9 18 18" style="left:47.5px;top:1055.5px;"><path d="M-7,0 H7 M0,-7 V7" stroke="#333" stroke-width="2.6"/></svg>
<svg width="180" height="29" viewBox="0 0 180 29" style="left:73px;top:1050px;"><path d="M2,1 H165 L173,14.5 L165,28 H2 Q0.5,28 0.5,26 V3 Q0.5,1 2,1 Z" fill="#fff"/><path d="M34,1 L42,14.5 L34,28" fill="none" stroke="#d8d8d8" stroke-width="1.3"/><path d="M165,1 L173,14.5 L165,28" fill="none" stroke="#d8d8d8" stroke-width="1.3"/></svg>
<svg width="20" height="20" viewBox="-10 -10 20 20" style="left:82.0px;top:1051.5px;"><path d="M-9.5,0.5 L0,-8.5 L3.5,-5.2 V-7.5 H6.5 V-2.4 L9.5,0.5 H7.5 V8.5 H2.2 V2.5 H-2.2 V8.5 H-7.5 V0.5 Z" fill="#555"/></svg>
<div class="a" style="left:128px;top:1052px;width:97.5px;height:24px;overflow:hidden;">
<span class="t" style="left:2.6px;top:2.5px;font-size:14.8px;line-height:18px;color:#666;transform:scaleX(0.9473);">Exercise 5 - Flip</span>
</div>
<svg width="204" height="29" viewBox="0 0 204 29" style="left:246px;top:1050px;"><path d="M4,1 H197 Q200,1 200.4,3.5 L202.5,24 Q202.8,27 200,27 H4.5 Q1,27 1,24 V4 Q1,1 4,1 Z" fill="#e7e7e7"/></svg>
<svg width="16" height="16" viewBox="-8 -8 16 16" style="left:258.7px;top:1054.0px;"><circle r="6.7" fill="#6f9fdc"/><rect x="-1.3" y="-5" width="2.6" height="10" rx="1.2" fill="#fff"/><circle r="2.1" fill="#fff"/></svg>
<svg width="20" height="20" viewBox="-10 -10 20 20" style="left:277.0px;top:1052.0px;"><path d="M-8.5,-8 H3.5 L8.5,-4.5 V8.5 H-4 L-8.5,5 Z" fill="#fff" stroke="#222" stroke-width="1.2" stroke-linejoin="round"/><path d="M-4,8.5 V-4.5 H8.5 M-8.5,-8 L-4,-4.5" fill="none" stroke="#222" stroke-width="0.9"/><path d="M-5,-5.5 H3.5 V3 H-5 Z" fill="#8a8a8a" stroke="#555" stroke-width="0.9"/></svg>
<span class="t" style="left:300.3px;top:1054.3px;font-size:14.8px;line-height:18px;color:#666;transform:scaleX(0.9323);">Exercise 5 Assembly</span>
<div class="a" style="left:450px;top:1050px;width:199.5px;height:27.5px;background:#fff;border-bottom:2px solid #1c58b9;box-sizing:border-box;border-radius:2px 2px 5px 5px;"></div>
<svg width="20" height="20" viewBox="-10 -10 20 20" style="left:459.5px;top:1053.0px;"><path d="M-8,-3.5 L-4.5,-5.5 H-0.5 V8 H-5 L-8,6 Z" fill="#fff" stroke="#222" stroke-width="1.2" stroke-linejoin="round"/><path d="M-0.5,-6.5 L2,-8.5 H7 V6 L4.5,8 H-0.5 Z" fill="#fff" stroke="#222" stroke-width="1.2" stroke-linejoin="round"/><path d="M-5,8 V-3.2 M4.5,8 V-6.3" stroke="#222" stroke-width="0.8"/></svg>
<span class="t" style="left:482.3px;top:1054.3px;font-size:14.8px;line-height:18px;color:#2b2b2b;transform:scaleX(0.9220);">Exercise 5 Part Studio</span>
<svg width="170" height="170" viewBox="1740 85 170 170" style="left:1740px;top:85px;">
<path d="M1829.5,91.5 L1837,101 H1822 Z" fill="#9e9e9e"/>
<path d="M1829.5,238.5 L1837,231 H1822 Z" fill="#9e9e9e"/>
<path d="M1755.5,166 L1765,158.5 V173.5 Z" fill="#9e9e9e"/>
<path d="M1905,166 L1895.5,158.5 V173.5 Z" fill="#9e9e9e"/>
<path d="M1808.5,101.5 Q1790,108 1780.5,121" fill="none" stroke="#9e9e9e" stroke-width="4.5"/>
<path d="M1775.5,124.5 L1779,111.5 L1788,122.5 Z" fill="#9e9e9e"/>
<path d="M1851.5,101.5 Q1870,108 1879.5,121" fill="none" stroke="#9e9e9e" stroke-width="4.5"/>
<path d="M1884,124.5 L1881,111.5 L1872,122.5 Z" fill="#9e9e9e"/>
<path d="M1812,137.5 H1848 V143 L1857,149 V182 L1848,188 V194.5 H1812 V188 L1801.5,182 V149 L1812,143 Z" fill="#e6eaee"/>
<path d="M1816,144.5 H1843 Q1852.5,147 1852.5,154 V178 Q1852.5,186 1843,188.5 H1816 Q1807.5,186 1807.5,178 V154 Q1807.5,147 1816,144.5 Z" fill="#fbfcfd"/>
<path d="M1860.5,137.5 V196.5" stroke="#2a2ab0" stroke-width="1.4"/>
<path d="M1801.5,196.5 H1861" stroke="#35a835" stroke-width="1.4"/>
</svg>
<span class="t" style="left:1819.5px;top:157.5px;font-size:13.2px;line-height:16px;color:#111;transform:scaleX(0.9768);">Left</span>
<span class="t" style="left:1857.0px;top:119.5px;font-size:12.5px;line-height:15px;color:#5a5ad0;transform:scaleX(0.9166);">Z</span>
<span class="t" style="left:1786.5px;top:188.0px;font-size:12.5px;line-height:15px;color:#35a835;transform:scaleX(0.9597);">Y</span>
<svg width="20" height="20" viewBox="-10 -10 20 20" style="left:1865.0px;top:222.0px;"><path d="M0,-8.5 L8.5,-5.5 V3.5 L0,8.5 L-8.5,3.5 V-5.5 Z" fill="#fff" stroke="#333" stroke-width="1.2" stroke-linejoin="round"/><path d="M-8.5,-5.5 L0,-2 V8.5 L-8.5,3.5 Z" fill="#b9b9b9" stroke="#333" stroke-width="1"/><path d="M8.5,-5.5 L0,-2 V8.5 L8.5,3.5 Z" fill="#8c8c8c" stroke="#333" stroke-width="1"/><path d="M0,-8.5 L8.5,-5.5 L0,-2 L-8.5,-5.5 Z" fill="#f4f4f4" stroke="#333" stroke-width="1"/></svg>
<svg width="12" height="12" viewBox="-6 -6 12 12" style="left:1889.5px;top:226.0px;"><path d="M-3.8,-1.8 H3.8 L0,2.3 Z" fill="#222"/></svg>
<div class="a" style="left:1888px;top:400px;width:32px;height:132px;background:#fff;border:1px solid #c4c4c4;border-right:none;box-sizing:border-box;"></div>
<div class="a" style="left:1888px;top:433px;width:31px;height:1px;background:#c9c9c9;"></div>
<div class="a" style="left:1888px;top:466px;width:31px;height:1px;background:#c9c9c9;"></div>
<div class="a" style="left:1888px;top:499px;width:31px;height:1px;background:#c9c9c9;"></div>
<div class="a" style="left:1888px;top:543px;width:32px;height:166px;background:#fff;border:1px solid #c4c4c4;border-right:none;box-sizing:border-box;"></div>
<div class="a" style="left:1888px;top:576px;width:31px;height:1px;background:#c9c9c9;"></div>
<div class="a" style="left:1888px;top:609px;width:31px;height:1px;background:#c9c9c9;"></div>
<div class="a" style="left:1888px;top:642px;width:31px;height:1px;background:#c9c9c9;"></div>
<div class="a" style="left:1888px;top:675px;width:31px;height:1px;background:#c9c9c9;"></div>
<svg width="20" height="20" viewBox="-10 -10 20 20" style="left:1894.5px;top:406.5px;"><path d="M-8,2 L-1,-9 L3,-7 L-3,3 Z" fill="#8c8c8c"/><path d="M-4,3 L3,-7 L7,-3.5 L1,4 Z" fill="#a9a9a9"/><path d="M-8.5,3 H9 V9 H-8.5 Z" fill="#d2d2d2" stroke="#8c8c8c" stroke-width="0.8"/><circle cx="-5.5" cy="6" r="1.3" fill="#fff" stroke="#666" stroke-width="0.7"/></svg>
<svg width="20" height="20" viewBox="-10 -10 20 20" style="left:1894.5px;top:440.0px;"><rect x="-9.0" y="-9.0" width="2.4" height="2.4" fill="#2d5fb8"/><rect x="-9.0" y="-6.0" width="2.4" height="2.4" fill="#2d5fb8"/><rect x="-9.0" y="-3.0" width="2.4" height="2.4" fill="#2d5fb8"/><rect x="-6.0" y="-9.0" width="2.4" height="2.4" fill="#2d5fb8"/><rect x="-6.0" y="-6.0" width="2.4" height="2.4" fill="#2d5fb8"/><rect x="-6.0" y="-3.0" width="2.4" height="2.4" fill="#2d5fb8"/><rect x="-3.0" y="-9.0" width="2.4" height="2.4" fill="#2d5fb8"/><rect x="-3.0" y="-6.0" width="2.4" height="2.4" fill="#2d5fb8"/><rect x="-3.0" y="-3.0" width="2.4" height="2.4" fill="#2d5fb8"/><path d="M1.5,-3.5 L8.5,-1 V6 L1.5,9 L-4.5,6 V-0.5 Z M-4.5,-0.5 L1.5,2 L8.5,-1 M1.5,2 V9" fill="#fff" stroke="#222" stroke-width="1.1" stroke-linejoin="round"/></svg>
<svg width="20" height="20" viewBox="-10 -10 20 20" style="left:1894.5px;top:473.0px;"><rect x="-9.0" y="-9.0" width="2.4" height="2.4" fill="#333"/><rect x="-9.0" y="-6.0" width="2.4" height="2.4" fill="#333"/><rect x="-9.0" y="-3.0" width="2.4" height="2.4" fill="#333"/><rect x="-6.0" y="-9.0" width="2.4" height="2.4" fill="#333"/><rect x="-6.0" y="-6.0" width="2.4" height="2.4" fill="#333"/><rect x="-6.0" y="-3.0" width="2.4" height="2.4" fill="#333"/><rect x="-3.0" y="-9.0" width="2.4" height="2.4" fill="#333"/><rect x="-3.0" y="-6.0" width="2.4" height="2.4" fill="#333"/><rect x="-3.0" y="-3.0" width="2.4" height="2.4" fill="#333"/><path d="M1,-2 L6,0 V5 L1,7.5 L-3.5,5 V0 Z M-3.5,0 L1,2 L6,0 M1,2 V7.5" fill="#fff" stroke="#222" stroke-width="1" stroke-linejoin="round"/><path d="M-5.5,-1 Q-7.5,-1 -7.5,1.5 Q-7.5,3 -9,3.3 Q-7.5,3.6 -7.5,5 Q-7.5,8 -5.5,8 M7.5,-1 Q9.5,-1 9.5,1.5 Q9.5,3 10.5,3.3 Q9.5,3.6 9.5,5 Q9.5,8 7.5,8" fill="none" stroke="#222" stroke-width="1"/></svg>
<svg width="20" height="20" viewBox="-10 -10 20 20" style="left:1894.5px;top:506.0px;"><rect x="-9.0" y="-9.0" width="2.4" height="2.4" fill="#333"/><rect x="-9.0" y="-6.0" width="2.4" height="2.4" fill="#333"/><rect x="-9.0" y="-3.0" width="2.4" height="2.4" fill="#333"/><rect x="-6.0" y="-9.0" width="2.4" height="2.4" fill="#333"/><rect x="-6.0" y="-6.0" width="2.4" height="2.4" fill="#333"/><rect x="-6.0" y="-3.0" width="2.4" height="2.4" fill="#333"/><rect x="-3.0" y="-9.0" width="2.4" height="2.4" fill="#333"/><rect x="-3.0" y="-6.0" width="2.4" height="2.4" fill="#333"/><rect x="-3.0" y="-3.0" width="2.4" height="2.4" fill="#333"/><path d="M-6,-1 Q-9,4 -6,9 M8,-1 Q11,4 8,9" fill="none" stroke="#222" stroke-width="1.4"/><text x="1" y="8.5" font-size="13" font-style="italic" font-weight="bold" font-family="Liberation Serif,serif" text-anchor="middle" fill="#222">x</text></svg>
<div class="a" style="left:1893px;top:547.5px;width:23.5px;height:23.5px;background:#dcdcdc;border-radius:3px;"></div>
<svg width="20" height="20" viewBox="-10 -10 20 20" style="left:1894.7px;top:549.3px;"><path d="M0,-1 Q-3,-9 -9.5,-7.5 Q-9,-1 -3.5,1 Q-8.5,3 -6,8.5 Q-1.5,6.5 0,2 Q1.5,6.5 6,8.5 Q8.5,3 3.5,1 Q9,-1 9.5,-7.5 Q3,-9 0,-1 Z" fill="#111"/></svg>
<div class="a" style="left:1893px;top:581px;width:23.5px;height:23.5px;background:#1c58b9;border-radius:2px;"></div>
<div class="a" style="left:1895px;top:583px;width:19.5px;height:19.5px;border:1px solid #cfe0ff;box-sizing:border-box;"></div>
<span class="t" style="left:1896px;top:583.5px;font-size:15px;line-height:19px;color:#fff;font-weight:bold;font-family:'Liberation Serif',serif;transform:scaleX(0.72);">MK</span>
<div class="a" style="left:1893px;top:614px;width:23.5px;height:23.5px;background:#dcdcdc;border-radius:3px;"></div>
<svg width="20" height="20" viewBox="-10 -10 20 20" style="left:1894.7px;top:616.5px;"><rect x="-8.5" y="-3.5" width="17" height="11" rx="1.5" fill="#222" transform="rotate(-6)"/><circle cx="-3.5" cy="1.5" r="2.7" fill="#fff" stroke="#2d5fb8" stroke-width="0.9"/><circle cx="3.5" cy="0.8" r="2.7" fill="#fff" stroke="#2d5fb8" stroke-width="0.9"/><circle cx="-3.2" cy="2" r="1" fill="#2d5fb8"/><circle cx="3.8" cy="1.3" r="1" fill="#2d5fb8"/><path d="M0,-3.5 V-7.5 M-4,-8.5 h2 M-1,-8.5 h2 M2,-8.5 h2" stroke="#2d5fb8" stroke-width="1.1"/></svg>
<div class="a" style="left:1893px;top:647px;width:23.5px;height:23.5px;background:#4fae54;border-radius:2px;"></div>
<div class="a" style="left:1895px;top:649px;width:19.5px;height:19.5px;border:1px solid #d6f2d6;box-sizing:border-box;"></div>
<svg width="20" height="20" viewBox="-10 -10 20 20" style="left:1894.7px;top:649.0px;"><path d="M-7,-5.5 Q-3,-6.5 -0.7,-4.5 V6 Q-3,4.5 -7,5 Z M7,-5.5 Q3,-6.5 0.7,-4.5 V6 Q3,4.5 7,5 Z" fill="#fff"/></svg>
<div class="a" style="left:1893px;top:680px;width:23.5px;height:23.5px;background:#1c58b9;border-radius:2px;"></div>
<div class="a" style="left:1895px;top:682px;width:19.5px;height:19.5px;border:1px solid #cfe0ff;box-sizing:border-box;"></div>
<svg width="20" height="20" viewBox="-10 -10 20 20" style="left:1894.7px;top:682.0px;"><path d="M-7,-5.5 Q-3,-6.5 -0.7,-4.5 V6 Q-3,4.5 -7,5 Z M7,-5.5 Q3,-6.5 0.7,-4.5 V6 Q3,4.5 7,5 Z" fill="#fff"/></svg>
<svg width="18" height="18" viewBox="-9 -9 18 18" style="left:1821.0px;top:1027.0px;"><path d="M-8,0.3 H3 M-8,0.3 V5.8 H8 V-3.2" fill="none" stroke="#333" stroke-width="1.2"/><ellipse cx="2.4" cy="-3.4" rx="5.6" ry="3.1" fill="#fff" stroke="#333" stroke-width="1.2"/><ellipse cx="2.4" cy="-3.6" rx="2.3" ry="1.1" fill="none" stroke="#333" stroke-width="1"/><path d="M-3.2,-2.8 Q-3,0.8 3,0.5 Q7.5,0 8,-2.8" fill="none" stroke="#333" stroke-width="1"/><path d="M-5.5,3.3 v2.2 M-3,3.3 v2.2 M-0.5,3.3 v2.2 M2,3.3 v2.2 M4.5,3.3 v2.2" stroke="#555" stroke-width="0.7"/></svg>
<svg width="22" height="22" viewBox="-11 -11 22 22" style="left:1854.0px;top:1025.8px;"><path d="M-10,6.2 A10,12 0 0 1 10,6.2 Z" fill="#fff" stroke="#333" stroke-width="1.2" stroke-linejoin="round"/><path d="M-8,5 A8,9.8 0 0 1 8,5" fill="none" stroke="#9a9a9a" stroke-width="1.6" stroke-dasharray="0.7 1.1"/><path d="M-5.6,4.6 Q-4.5,-1.2 0,-1.2 Q4.5,-1.2 5.6,4.6" fill="none" stroke="#333" stroke-width="2"/><path d="M-2.2,5.6 Q0,3.2 2.2,5.6" fill="#333"/></svg>
<svg width="18" height="18" viewBox="-9 -9 18 18" style="left:1891.0px;top:1027.0px;"><path d="M0,-7 V4.5 M-6.5,-5 H6.5" stroke="#333" stroke-width="1.4" fill="none"/><path d="M-5.2,-5 L-7,1.2 H-3.4 Z M5.2,-5 L3.4,1.2 H7 Z" fill="none" stroke="#333" stroke-width="0.8"/><path d="M-7.2,1 H-3.2 V2.2 H-7.2 Z M3.2,1 H7.2 V2.2 H3.2 Z" fill="#333"/><path d="M-7,4.9 H7 M-7,6.8 H7" stroke="#333" stroke-width="1.3"/></svg>
</body></html>
